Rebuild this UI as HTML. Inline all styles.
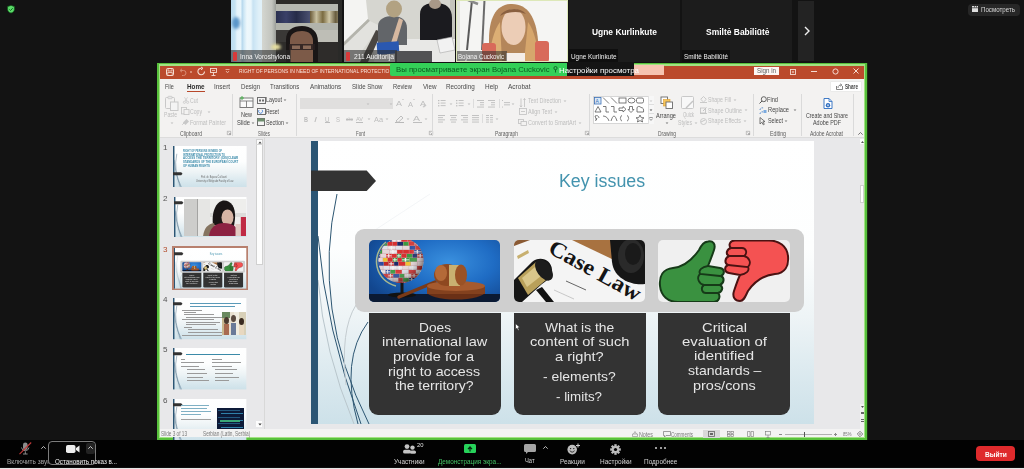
<!DOCTYPE html><html><head><meta charset="utf-8">
<style>
*{margin:0;padding:0;box-sizing:border-box}
html,body{width:1024px;height:469px;overflow:hidden;background:#131313;font-family:"Liberation Sans",sans-serif}
.a{position:absolute}
.t{position:absolute;white-space:nowrap;line-height:1}
svg{overflow:visible}
</style></head><body>
<div class="a" style="left:0;top:0;width:1024px;height:469px;overflow:hidden">
<svg class="a" style="left:6.5px;top:5.2px;" width="8" height="8.5" viewBox="0 0 8 8.5"><path d="M4 0.4 L7.4 1.6 V4.2 C7.4 6.2 6 7.4 4 8.1 C2 7.4 0.6 6.2 0.6 4.2 V1.6 Z" fill="#5cdc6a" stroke="#0e5a18" stroke-width="0.7"></path><path d="M2.4 4.4 L3.6 5.5 L5.7 3.2" stroke="#0e6a1e" stroke-width="1" fill="none"></path></svg>
<div class="a" style="left:231px;top:0px;width:111px;height:62px;background:#b9bab4;overflow:hidden;">
<div class="a" style="left:0px;top:0px;width:31px;height:62px;background:linear-gradient(90deg,#bcdcf0 0,#c4e2f2 4px,#e4f2fa 6px,#e8f6fc 10px,#b4d6ec 11px,#cfe8f5 13px,#eef8fc 16px,#eaf6fb 20px,#c8e2f2 22px,#d4eaf6 25px,#e0f0f8 28px);"></div>
<div class="a" style="left:1px;top:17px;width:8px;height:12px;border-radius:50%;background:#5b96c9;filter:blur(1.5px)"></div>
<div class="a" style="left:31px;top:0px;width:14px;height:62px;background:linear-gradient(90deg,#d4d6d0,#c2c4be 70%,#9a9d98);"></div>
<div class="a" style="left:45px;top:0px;width:66px;height:4px;background:#2c2b28;"></div>
<div class="a" style="left:45px;top:4px;width:66px;height:7px;background:#b6b8b0;"></div>
<div class="a" style="left:45px;top:11px;width:34px;height:12px;background:linear-gradient(90deg,#2a3050,#3a4068 30%,#262c48 60%,#4a5070);"></div>
<div class="a" style="left:79px;top:11px;width:32px;height:12px;background:linear-gradient(90deg,#6a5a38,#c8c0a0 20%,#7a6a40 40%,#d0c8a8 60%,#6a5e40 80%,#b0a888);"></div>
<div class="a" style="left:45px;top:23px;width:66px;height:7px;background:#b2b4ac;"></div>
<div class="a" style="left:45px;top:30px;width:14px;height:12px;background:#3a3836;"></div>
<div class="a" style="left:59px;top:30px;width:52px;height:12px;background:#bebeb6;"></div>
<div class="a" style="left:45px;top:42px;width:66px;height:20px;background:#2e2c2a;"></div>
<div class="a" style="left:107px;top:0px;width:4px;height:62px;background:#2a2a28;"></div>
<div class="a" style="left:40px;top:44px;width:10px;height:6px;border-radius:50%;background:#e8e0a0;filter:blur(1.5px)"></div>
<svg class="a" style="left:0;top:0" width="111" height="62"><path d="M55 62 L55 40 C55 30 62 26 71 26 C80 26 87 31 87 42 L87 62 Z" fill="#1a1616"></path><path d="M59 62 V40 C59 34 64 31 71 31 C78 31 82 35 82 41 V62 Z" fill="#7c5a48"></path><path d="M58 44 H84 V50 H58 Z" fill="#2a2020" opacity="0.85"></path><rect x="61" y="45.5" width="8" height="3.5" fill="#8a6a58"></rect><rect x="72" y="45.5" width="8" height="3.5" fill="#8a6a58"></rect></svg>
<div class="a" style="left:0px;top:50px;width:60px;height:12px;background:rgba(45,45,45,0.6);"></div>
<div class="a" style="left:2px;top:52px;width:4px;height:9px;background:#d83a3a;border-radius:1px"></div>
</div>
<div class="t" style="left: 240px; top: 52.95px; font-size: 7px; color: rgb(244, 244, 244); font-weight: 400; font-family: &quot;Liberation Sans&quot;; transform-origin: 0px 50%; transform: scaleX(0.924);">Inna Voroshylona</div>
<div class="a" style="left:344px;top:0px;width:111px;height:62px;background:#d6d6d0;overflow:hidden;">
<svg class="a" style="left:0;top:0" width="111" height="62">
<polygon points="0,0 22,0 24,19 0,42" fill="#f4f4f2"></polygon>
<polygon points="0,42 24,19 26,21 0,46" fill="#b4b4ac"></polygon>
<polygon points="0,46 26,21 36,26 10,62 0,62" fill="#e2e2de"></polygon>
<rect x="106" y="0" width="5" height="62" fill="#c4c4bc"></rect>
<rect x="30" y="39" width="81" height="23" fill="#e8e8e6"></rect>
<polygon points="16,62 32,30 38,32 24,62" fill="#4a4642"></polygon>
<path d="M76 40 V14 C76 6 82 3 92 3 C102 3 108 8 108 18 V40 Z" fill="#1b1b1f"></path>
<ellipse cx="91" cy="4" rx="6" ry="5" fill="#a89888"></ellipse>
<path d="M34 45 V26 C34 19 41 16 49 16 C57 16 63 20 63 28 V45 Z" fill="#626569"></path>
<ellipse cx="50" cy="9" rx="8" ry="8.5" fill="#b2a282"></ellipse>
<path d="M47 43 L55 18 L59 20 L52 44 Z" fill="#d6b8a0"></path>
<rect x="33" y="42" width="22" height="12" fill="#2a58b0" transform="rotate(-4 44 48)"></rect>
<rect x="51" y="51" width="37" height="11" fill="#525254"></rect>
<polygon points="93,40 108,37 111,50 96,53" fill="#f2f2f2" stroke="#aaa" stroke-width="0.6"></polygon>
</svg>
<div class="a" style="left:0px;top:50px;width:53px;height:12px;background:rgba(45,45,45,0.6);"></div>
<div class="a" style="left:2px;top:52px;width:4px;height:9px;background:#d83a3a;border-radius:1px"></div>
</div>
<div class="t" style="left: 354px; top: 52.95px; font-size: 7px; color: rgb(244, 244, 244); font-weight: 400; font-family: &quot;Liberation Sans&quot;; transform-origin: 0px 50%; transform: scaleX(0.955);">211 Auditorija</div>
<div class="a" style="left:456px;top:0px;width:112px;height:62px;background:#f5f5f3;overflow:hidden;border:1px solid #dde8b8">
<svg class="a" style="left:-1px;top:-1px" width="112" height="62">
<rect x="0" y="0" width="4" height="62" fill="#e4e4de"></rect>
<path d="M16 0 L11 50" stroke="#5a5a5a" stroke-width="2"></path>
<path d="M28.5 0 L26 50" stroke="#6a6a6a" stroke-width="2"></path>
<path d="M12 0 L22 4" stroke="#8a8a8a" stroke-width="2.5"></path>
<path d="M33 62 L33 40 C33 18 40 4 56 4 C72 4 80 18 82 40 L83 62 Z" fill="#b4865a"></path>
<path d="M33 62 C34 45 38 30 44 22 L46 62 Z" fill="#dcae74"></path>
<path d="M83 62 C82 45 78 30 72 22 L68 62 Z" fill="#d6a66c"></path>
<ellipse cx="57.5" cy="27" rx="12" ry="18" fill="#eccdb6"></ellipse>
<path d="M44 16 C48 8 64 6 70 14 C64 11 52 11 44 16 Z" fill="#8a6040"></path>
<rect x="26" y="43" width="14" height="19" rx="3" fill="#d86a5a"></rect>
<rect x="79" y="41" width="14" height="21" rx="3" fill="#d86a5a"></rect>
<rect x="50" y="53" width="19" height="9" fill="#f4ede8"></rect>
</svg>
<div class="a" style="left:-1px;top:49.6px;width:51px;height:12.4px;background:rgba(45,45,45,0.55);"></div>
</div>
<div class="t" style="left: 458px; top: 52.95px; font-size: 7px; color: rgb(244, 244, 244); font-weight: 400; font-family: &quot;Liberation Sans&quot;; transform-origin: 0px 50%; transform: scaleX(0.882);">Bojana Cuckovic</div>
<div class="a" style="left:569px;top:0px;width:111px;height:62px;background:#1c1c1c;"></div>
<div class="t" style="left: 592px; top: 28.45px; font-size: 9px; color: rgb(255, 255, 255); font-weight: 700; font-family: &quot;Liberation Sans&quot;; transform-origin: 0px 50%; transform: scaleX(0.935);">Ugne Kurlinkute</div>
<div class="a" style="left:569px;top:49px;width:49px;height:13px;background:#0f0f0f;"></div>
<div class="t" style="left: 570.5px; top: 52.75px; font-size: 7px; color: rgb(238, 238, 238); font-weight: 400; font-family: &quot;Liberation Sans&quot;; transform-origin: 0px 50%; transform: scaleX(0.913);">Ugne Kurlinkute</div>
<div class="a" style="left:682px;top:0px;width:110px;height:62px;background:#1c1c1c;"></div>
<div class="t" style="left: 705.5px; top: 28.25px; font-size: 9px; color: rgb(255, 255, 255); font-weight: 700; font-family: &quot;Liberation Sans&quot;; transform-origin: 0px 50%; transform: scaleX(0.941);">Smiltė Babiliūtė</div>
<div class="a" style="left:682px;top:50px;width:48px;height:12px;background:#0f0f0f;"></div>
<div class="t" style="left: 683.5px; top: 52.55px; font-size: 7px; color: rgb(238, 238, 238); font-weight: 400; font-family: &quot;Liberation Sans&quot;; transform-origin: 0px 50%; transform: scaleX(0.912);">Smiltė Babiliūtė</div>
<div class="a" style="left:798px;top:1px;width:16px;height:60px;background:#232323;"></div>
<svg class="a" style="left:803px;top:26px;" width="8" height="10" viewBox="0 0 8 10"><path d="M2 1 L6 5 L2 9" stroke="#f0f0f0" stroke-width="1.4" fill="none"></path></svg>
<div class="a" style="left:968px;top:4px;width:52px;height:12px;background:#272727;border-radius:4px"></div>
<svg class="a" style="left:972px;top:6px;" width="6" height="6" viewBox="0 0 6 6"><rect x="0" y="0" width="6" height="1.5" fill="#e0e0e0"></rect><rect x="0" y="2.2" width="6" height="3.8" fill="#e0e0e0"></rect><rect x="2" y="0" width="0.6" height="1.5" fill="#272727"></rect><rect x="4" y="0" width="0.6" height="1.5" fill="#272727"></rect></svg>
<div class="t" style="left: 981px; top: 6.35px; font-size: 7px; color: rgb(216, 216, 216); font-weight: 400; font-family: &quot;Liberation Sans&quot;; transform-origin: 0px 50%; transform: scaleX(0.881);">Посмотреть</div>
<div class="a" style="left:157px;top:63px;width:711px;height:378px;background:#1c3214;"></div>
<div class="a" style="left:157px;top:63px;width:710px;height:377px;background:#58c13c;"></div>
<div class="a" style="left:159px;top:64px;width:706px;height:374px;background:#a3e283;"></div>
<div class="a" style="left:159.5px;top:65.5px;width:704.5px;height:371.5px;background:#f3f2f1;"></div>
<div class="a" style="left:159.5px;top:65.5px;width:704.5px;height:13px;background:#bb4a2c;"></div>
<div class="a" style="left:159.5px;top:137px;width:704.5px;height:292.3px;background:#e8e8ea;"></div>
<div class="a" style="left:159.5px;top:137px;width:704.2px;height:1px;background:#dcdcdc;"></div>
<div class="a" style="left:159.5px;top:429.3px;width:704.2px;height:8.1px;background:#f3f3f3;"></div>
<svg class="a" style="left:166px;top:67.5px;" width="8" height="8" viewBox="0 0 8 8"><rect x="0.5" y="0.5" width="7" height="7" rx="1" fill="none" stroke="#f6dcd2" stroke-width="1"></rect><rect x="2" y="0.5" width="4" height="2.5" fill="none" stroke="#f6dcd2" stroke-width="0.8"></rect><rect x="1.8" y="4.6" width="4.4" height="2.9" fill="none" stroke="#f6dcd2" stroke-width="0.8"></rect></svg>
<svg class="a" style="left:179px;top:67.5px;" width="7" height="8" viewBox="0 0 7 8"><path d="M1.5 2.5 H4.5 A2.5 2.5 0 0 1 4.5 7.5 H3" stroke="#d98c74" stroke-width="1" fill="none"></path><path d="M3 0.8 L1 2.5 L3 4.2" stroke="#d98c74" stroke-width="1" fill="none"></path></svg>
<div class="a" style="left:190px;top:71px;width:1.5px;height:1.5px;background:#d98c74;"></div>
<svg class="a" style="left:196.5px;top:67px;" width="9" height="9" viewBox="0 0 9 9"><path d="M7.5 4.5 A3.3 3.3 0 1 1 4.5 1.2" stroke="#f6dcd2" stroke-width="1.1" fill="none"></path><path d="M4 0 L6 1.3 L4 2.8" stroke="#f6dcd2" stroke-width="1" fill="none"></path></svg>
<svg class="a" style="left:210px;top:67.5px;" width="7" height="8" viewBox="0 0 7 8"><rect x="0.5" y="0.5" width="6" height="4" fill="none" stroke="#f6dcd2" stroke-width="0.9"></rect><path d="M3.5 4.5 V7.5 M1.5 7.5 H5.5" stroke="#f6dcd2" stroke-width="0.9"></path><path d="M2 2.5 H5" stroke="#f6dcd2" stroke-width="0.7"></path></svg>
<svg class="a" style="left:225px;top:69px;" width="5" height="5" viewBox="0 0 5 5"><path d="M0.5 0.5 H4.5 M1 2 L2.5 3.8 L4 2" stroke="#f0c8b8" stroke-width="0.8" fill="none"></path></svg>
<div class="t" style="left: 239px; top: 67.79px; font-size: 6.2px; color: rgb(248, 228, 220); font-weight: 400; font-family: &quot;Liberation Sans&quot;; transform-origin: 0px 50%; transform: scaleX(0.805);">RIGHT OF PERSONS IN NEED OF INTERNATIONAL PROTECTIO</div>
<div class="a" style="left:754px;top:67px;width:25px;height:8px;background:#fdf7f4;"></div>
<div class="t" style="left: 757px; top: 67.72px; font-size: 6.5px; color: rgb(90, 90, 90); font-weight: 400; font-family: &quot;Liberation Sans&quot;; transform-origin: 0px 50%; transform: scaleX(0.956);">Sign in</div>
<svg class="a" style="left:789.5px;top:68.5px;" width="6" height="6" viewBox="0 0 6 6"><rect x="0.5" y="0.5" width="5" height="5" fill="none" stroke="#f6dcd2" stroke-width="0.9"></rect><path d="M1.8 3 H4.2 M3 1.8 V4.2" stroke="#f6dcd2" stroke-width="0.7"></path></svg>
<div class="a" style="left:811px;top:71px;width:6px;height:1px;background:#f6dcd2;"></div>
<svg class="a" style="left:832px;top:68px;" width="7" height="7" viewBox="0 0 7 7"><circle cx="3.5" cy="3.5" r="2.6" fill="none" stroke="#f6dcd2" stroke-width="1"></circle></svg>
<svg class="a" style="left:853px;top:68px;" width="6" height="6" viewBox="0 0 6 6"><path d="M0.5 0.5 L5.5 5.5 M5.5 0.5 L0.5 5.5" stroke="#f6dcd2" stroke-width="1"></path></svg>
<div class="a" style="left:390px;top:63.3px;width:177px;height:12.8px;background:#34d058;border-radius:2px 0 0 2px"></div>
<div class="t" style="left: 396.4px; top: 66.4px; font-size: 8px; color: rgb(12, 90, 31); font-weight: 400; font-family: &quot;Liberation Sans&quot;; transform-origin: 0px 50%; transform: scaleX(0.968);">Вы просматриваете экран Bojana Cuckovic</div>
<div class="a" style="left:567px;top:62px;width:67px;height:14px;background:#141414;"></div>
<div class="a" style="left:634px;top:64.6px;width:30px;height:10.4px;background:#f6c3b0;"></div>
<svg class="a" style="left:553px;top:66px;" width="5" height="7" viewBox="0 0 5 7"><path d="M2.5 0.5 A1.6 1.6 0 1 1 2.5 3.7 A1.6 1.6 0 1 1 2.5 0.5 M2.5 3.7 V6.5" stroke="#12652a" stroke-width="1" fill="none"></path></svg>
<div class="t" style="left: 558.5px; top: 66.5px; font-size: 8px; color: rgb(255, 255, 255); font-weight: 400; font-family: &quot;Liberation Sans&quot;; transform-origin: 0px 50%; transform: scaleX(0.987);">Настройки просмотра</div>
<div class="t" style="left: 164.5px; top: 82.65px; font-size: 7px; color: rgb(74, 74, 74); font-weight: 400; font-family: &quot;Liberation Sans&quot;; transform-origin: 0px 50%; transform: scaleX(0.78);">File</div>
<div class="t" style="left: 187.2px; top: 82.65px; font-size: 7px; color: rgb(43, 43, 43); font-weight: 700; font-family: &quot;Liberation Sans&quot;; transform-origin: 0px 50%; transform: scaleX(0.905);">Home</div>
<div class="t" style="left: 214.3px; top: 82.65px; font-size: 7px; color: rgb(74, 74, 74); font-weight: 400; font-family: &quot;Liberation Sans&quot;; transform-origin: 0px 50%; transform: scaleX(0.919);">Insert</div>
<div class="t" style="left: 240.6px; top: 82.65px; font-size: 7px; color: rgb(74, 74, 74); font-weight: 400; font-family: &quot;Liberation Sans&quot;; transform-origin: 0px 50%; transform: scaleX(0.876);">Design</div>
<div class="t" style="left: 270px; top: 82.65px; font-size: 7px; color: rgb(74, 74, 74); font-weight: 400; font-family: &quot;Liberation Sans&quot;; transform-origin: 0px 50%; transform: scaleX(0.859);">Transitions</div>
<div class="t" style="left: 309.8px; top: 82.65px; font-size: 7px; color: rgb(74, 74, 74); font-weight: 400; font-family: &quot;Liberation Sans&quot;; transform-origin: 0px 50%; transform: scaleX(0.901);">Animations</div>
<div class="t" style="left: 351.5px; top: 82.65px; font-size: 7px; color: rgb(74, 74, 74); font-weight: 400; font-family: &quot;Liberation Sans&quot;; transform-origin: 0px 50%; transform: scaleX(0.871);">Slide Show</div>
<div class="t" style="left: 392.5px; top: 82.65px; font-size: 7px; color: rgb(74, 74, 74); font-weight: 400; font-family: &quot;Liberation Sans&quot;; transform-origin: 0px 50%; transform: scaleX(0.828);">Review</div>
<div class="t" style="left: 422.5px; top: 82.65px; font-size: 7px; color: rgb(74, 74, 74); font-weight: 400; font-family: &quot;Liberation Sans&quot;; transform-origin: 0px 50%; transform: scaleX(0.897);">View</div>
<div class="t" style="left: 445.8px; top: 82.65px; font-size: 7px; color: rgb(74, 74, 74); font-weight: 400; font-family: &quot;Liberation Sans&quot;; transform-origin: 0px 50%; transform: scaleX(0.899);">Recording</div>
<div class="t" style="left: 484.8px; top: 82.65px; font-size: 7px; color: rgb(74, 74, 74); font-weight: 400; font-family: &quot;Liberation Sans&quot;; transform-origin: 0px 50%; transform: scaleX(0.916);">Help</div>
<div class="t" style="left: 508px; top: 82.65px; font-size: 7px; color: rgb(74, 74, 74); font-weight: 400; font-family: &quot;Liberation Sans&quot;; transform-origin: 0px 50%; transform: scaleX(0.933);">Acrobat</div>
<div class="a" style="left:187px;top:90.5px;width:18px;height:1.6px;background:#b7472a;"></div>
<div class="a" style="left:831px;top:81.5px;width:29.5px;height:9px;background:#ffffff;box-shadow:0 0 0 0.5px #e4e4e4"></div>
<svg class="a" style="left:835.5px;top:82.5px;" width="7" height="7" viewBox="0 0 7 7"><path d="M0.5 3 V6.5 H6.5 V3" stroke="#666" stroke-width="0.8" fill="none"></path><path d="M2 5 C2 2.5 3.5 2 5.5 2 M4.3 0.8 L5.8 2 L4.3 3.3" stroke="#666" stroke-width="0.8" fill="none"></path></svg>
<div class="t" style="left: 845px; top: 82.75px; font-size: 7px; color: rgb(71, 71, 71); font-weight: 700; font-family: &quot;Liberation Sans&quot;; transform-origin: 0px 50%; transform: scaleX(0.668);">Share</div>
<svg class="a" style="left:165px;top:96px;" width="14" height="15" viewBox="0 0 14 15"><rect x="0.5" y="1.5" width="9" height="11" rx="1" fill="none" stroke="#c8c8c8" stroke-width="1"></rect><rect x="3" y="0.3" width="4" height="2.4" rx="0.6" fill="#e8e8e8" stroke="#c8c8c8" stroke-width="0.8"></rect><rect x="5.5" y="6" width="7.5" height="8.5" fill="#f4f4f4" stroke="#c8c8c8" stroke-width="1"></rect></svg>
<div class="t" style="left: 164px; top: 112.42px; font-size: 6.5px; color: rgb(189, 189, 189); font-weight: 400; font-family: &quot;Liberation Sans&quot;; transform-origin: 0px 50%; transform: scaleX(0.782);">Paste</div>
<svg class="a" style="left:169.5px;top:121.5px;" width="4" height="3" viewBox="0 0 4 3"><path d="M0.6 0.4 L2 2 L3.4 0.4 Z" fill="#bdbdbd"></path></svg>
<svg class="a" style="left:183px;top:97px;" width="6" height="7" viewBox="0 0 6 7"><circle cx="1.4" cy="5.3" r="1.1" fill="none" stroke="#c4c4c4" stroke-width="0.7"></circle><circle cx="4.6" cy="5.3" r="1.1" fill="none" stroke="#c4c4c4" stroke-width="0.7"></circle><path d="M1.5 0.3 L4 4.3 M4.5 0.3 L2 4.3" stroke="#c4c4c4" stroke-width="0.7"></path></svg>
<div class="t" style="left: 190px; top: 97.72px; font-size: 6.5px; color: rgb(189, 189, 189); font-weight: 400; font-family: &quot;Liberation Sans&quot;; transform-origin: 0px 50%; transform: scaleX(0.79);">Cut</div>
<svg class="a" style="left:181px;top:107px;" width="9" height="8" viewBox="0 0 9 8"><rect x="0.4" y="0.4" width="5" height="6.5" fill="none" stroke="#c4c4c4" stroke-width="0.8"></rect><rect x="3" y="2.4" width="5" height="5.2" fill="#f3f2f1" stroke="#c4c4c4" stroke-width="0.8"></rect></svg>
<div class="t" style="left: 190px; top: 108.92px; font-size: 6.5px; color: rgb(189, 189, 189); font-weight: 400; font-family: &quot;Liberation Sans&quot;; transform-origin: 0px 50%; transform: scaleX(0.79);">Copy</div>
<svg class="a" style="left:206.5px;top:110.5px;" width="4" height="3" viewBox="0 0 4 3"><path d="M0.6 0.4 L2 2 L3.4 0.4 Z" fill="#bdbdbd"></path></svg>
<svg class="a" style="left:182px;top:118px;" width="8" height="7" viewBox="0 0 8 7"><path d="M1 4.5 L4.5 1 L7 3.5 L3.5 7 Z" fill="#c8c8c8"></path><path d="M0.3 6.7 L2 5" stroke="#c8c8c8" stroke-width="1"></path></svg>
<div class="t" style="left: 190px; top: 119.92px; font-size: 6.5px; color: rgb(189, 189, 189); font-weight: 400; font-family: &quot;Liberation Sans&quot;; transform-origin: 0px 50%; transform: scaleX(0.837);">Format Painter</div>
<div class="t" style="left: 180px; top: 130.63px; font-size: 6.3px; color: rgb(92, 92, 92); font-weight: 400; font-family: &quot;Liberation Sans&quot;; transform-origin: 0px 50%; transform: scaleX(0.816);">Clipboard</div>
<svg class="a" style="left:227px;top:131px;" width="4" height="4" viewBox="0 0 4 4"><path d="M0.3 0.3 H3.7 V3.7 H0.3 Z M1.5 1.5 L3.4 3.4 M3.4 2 V3.4 H2" stroke="#8a8a8a" stroke-width="0.5" fill="none"></path></svg>
<div class="a" style="left:232px;top:94px;width:0.8px;height:42px;background:#dadada;"></div>
<svg class="a" style="left:239px;top:96px;" width="15" height="12" viewBox="0 0 15 12"><rect x="1" y="2" width="13" height="9.5" fill="#fafafa" stroke="#7a7a7a" stroke-width="1"></rect><path d="M1 5 H14 M7.5 5 V11.5" stroke="#7a7a7a" stroke-width="0.9"></path><path d="M3 0 V4 M1 2 H5" stroke="#4caf50" stroke-width="1"></path></svg>
<div class="t" style="left: 241px; top: 112.36px; font-size: 6.8px; color: rgb(71, 71, 71); font-weight: 400; font-family: &quot;Liberation Sans&quot;; transform-origin: 0px 50%; transform: scaleX(0.808);">New</div>
<div class="t" style="left: 237px; top: 119.66px; font-size: 6.8px; color: rgb(71, 71, 71); font-weight: 400; font-family: &quot;Liberation Sans&quot;; transform-origin: 0px 50%; transform: scaleX(0.86);">Slide</div>
<svg class="a" style="left:251px;top:121.7px;" width="4" height="3" viewBox="0 0 4 3"><path d="M0.6 0.4 L2 2 L3.4 0.4 Z" fill="#777"></path></svg>
<svg class="a" style="left:257px;top:97px;" width="9" height="7" viewBox="0 0 9 7"><rect x="0.5" y="0.5" width="8" height="6" fill="#f4f4f4" stroke="#6e6e6e" stroke-width="1"></rect><rect x="2" y="2.5" width="2" height="2" fill="#6e6e6e"></rect><rect x="5" y="2.5" width="2" height="2" fill="#6e6e6e"></rect></svg>
<div class="t" style="left: 266px; top: 97.46px; font-size: 6.8px; color: rgb(71, 71, 71); font-weight: 400; font-family: &quot;Liberation Sans&quot;; transform-origin: 0px 50%; transform: scaleX(0.783);">Layout</div>
<svg class="a" style="left:283px;top:99.4px;" width="4" height="3" viewBox="0 0 4 3"><path d="M0.6 0.4 L2 2 L3.4 0.4 Z" fill="#777"></path></svg>
<svg class="a" style="left:257px;top:108px;" width="9" height="7" viewBox="0 0 9 7"><rect x="0.5" y="0.5" width="8" height="6" fill="#f4f4f4" stroke="#6e6e6e" stroke-width="1"></rect><path d="M2 2 A2 2 0 1 0 5 1.8" stroke="#3a7bd5" stroke-width="0.8" fill="none"></path></svg>
<div class="t" style="left: 266px; top: 108.66px; font-size: 6.8px; color: rgb(71, 71, 71); font-weight: 400; font-family: &quot;Liberation Sans&quot;; transform-origin: 0px 50%; transform: scaleX(0.732);">Reset</div>
<svg class="a" style="left:257px;top:118px;" width="8" height="8" viewBox="0 0 8 8"><rect x="0.5" y="0.5" width="7" height="7" fill="#f4f4f4" stroke="#6e6e6e" stroke-width="1"></rect><rect x="0.5" y="0.5" width="7" height="3" fill="#6e8e6e"></rect></svg>
<div class="t" style="left: 266px; top: 119.76px; font-size: 6.8px; color: rgb(71, 71, 71); font-weight: 400; font-family: &quot;Liberation Sans&quot;; transform-origin: 0px 50%; transform: scaleX(0.794);">Section</div>
<svg class="a" style="left:285px;top:121.7px;" width="4" height="3" viewBox="0 0 4 3"><path d="M0.6 0.4 L2 2 L3.4 0.4 Z" fill="#777"></path></svg>
<div class="t" style="left: 258px; top: 130.63px; font-size: 6.3px; color: rgb(92, 92, 92); font-weight: 400; font-family: &quot;Liberation Sans&quot;; transform-origin: 0px 50%; transform: scaleX(0.699);">Slides</div>
<div class="a" style="left:296px;top:94px;width:0.8px;height:42px;background:#dadada;"></div>
<div class="a" style="left:300px;top:98.4px;width:70.5px;height:10.8px;background:#e0dfde;"></div>
<div class="a" style="left:371px;top:98.4px;width:22px;height:10.8px;background:#e0dfde;"></div>
<svg class="a" style="left:366px;top:103px;" width="4" height="3" viewBox="0 0 4 3"><path d="M0.6 0.4 L2 2 L3.4 0.4 Z" fill="#bdbdbd"></path></svg>
<svg class="a" style="left:389px;top:103px;" width="4" height="3" viewBox="0 0 4 3"><path d="M0.6 0.4 L2 2 L3.4 0.4 Z" fill="#bdbdbd"></path></svg>
<div class="t" style="left: 396px; top: 100.2px; font-size: 8px; color: rgb(189, 189, 189); font-weight: 400; font-family: &quot;Liberation Sans&quot;; transform-origin: 0px 50%; transform: scaleX(1.123);">A</div>
<div class="t" style="left: 402px; top: 98.55px; font-size: 5px; color: rgb(189, 189, 189); font-weight: 400; font-family: &quot;Liberation Sans&quot;; transform-origin: 0px 50%; transform: scaleX(1.196);">ˆ</div>
<div class="t" style="left: 408px; top: 101.52px; font-size: 6.5px; color: rgb(189, 189, 189); font-weight: 400; font-family: &quot;Liberation Sans&quot;; transform-origin: 0px 50%; transform: scaleX(1.151);">A</div>
<div class="t" style="left: 413px; top: 98.85px; font-size: 5px; color: rgb(189, 189, 189); font-weight: 400; font-family: &quot;Liberation Sans&quot;; transform-origin: 0px 50%; transform: scaleX(1.196);">ˇ</div>
<div class="t" style="left: 420px; top: 100.2px; font-size: 8px; color: rgb(189, 189, 189); font-weight: 400; font-family: &quot;Liberation Sans&quot;; transform-origin: 0px 50%; transform: scaleX(1.123);">A</div>
<svg class="a" style="left:422px;top:103px;" width="5" height="5" viewBox="0 0 5 5"><path d="M0.5 4 L3 1 L4.5 2.5 L2 4.5 Z" fill="#c8c8c8"></path></svg>
<div class="t" style="left: 304px; top: 115.55px; font-size: 7px; color: rgb(189, 189, 189); font-weight: 700; font-family: &quot;Liberation Sans&quot;; transform-origin: 0px 50%; transform: scaleX(0.79);">B</div>
<div class="t" style="left: 314px; top: 115.55px; font-size: 7px; color: rgb(189, 189, 189); font-weight: 400; font-family: &quot;Liberation Sans&quot;; font-style: italic; transform-origin: 0px 50%; transform: scaleX(1.536);">I</div>
<div class="t" style="left: 325px; top: 115.55px; font-size: 7px; color: rgb(189, 189, 189); font-weight: 400; font-family: &quot;Liberation Sans&quot;; transform-origin: 0px 50%; transform: scaleX(0.889);">U</div>
<div class="a" style="left:325px;top:122px;width:4.5px;height:0.6px;background:#bdbdbd;"></div>
<div class="t" style="left: 336px; top: 115.55px; font-size: 7px; color: rgb(189, 189, 189); font-weight: 400; font-family: &quot;Liberation Sans&quot;; transform-origin: 0px 50%; transform: scaleX(0.856);">S</div>
<div class="t" style="left: 346px; top: 116.77px; font-size: 5.5px; color: rgb(189, 189, 189); font-weight: 400; font-family: &quot;Liberation Sans&quot;; transform-origin: 0px 50%; transform: scaleX(0.789);">abc</div>
<div class="a" style="left:346px;top:118.8px;width:7px;height:0.6px;background:#bdbdbd;"></div>
<div class="t" style="left: 356px; top: 115.7px; font-size: 6px; color: rgb(189, 189, 189); font-weight: 400; font-family: &quot;Liberation Sans&quot;; transform-origin: 0px 50%; transform: scaleX(0.926);">AV</div>
<div class="a" style="left:356px;top:122px;width:7px;height:0.6px;background:#bdbdbd;"></div>
<svg class="a" style="left:366.5px;top:118px;" width="4" height="3" viewBox="0 0 4 3"><path d="M0.6 0.4 L2 2 L3.4 0.4 Z" fill="#bdbdbd"></path></svg>
<div class="t" style="left: 374px; top: 115.55px; font-size: 7px; color: rgb(189, 189, 189); font-weight: 400; font-family: &quot;Liberation Sans&quot;; transform-origin: 0px 50%; transform: scaleX(1.051);">Aa</div>
<svg class="a" style="left:385px;top:118px;" width="4" height="3" viewBox="0 0 4 3"><path d="M0.6 0.4 L2 2 L3.4 0.4 Z" fill="#bdbdbd"></path></svg>
<svg class="a" style="left:395px;top:114px;" width="9" height="9" viewBox="0 0 9 9"><path d="M1 7 L6 2 L8 4 L3 8.5 Z" fill="none" stroke="#b8b8b8" stroke-width="0.9"></path><rect x="0" y="8" width="9" height="1" fill="#b8b8b8"></rect></svg>
<svg class="a" style="left:405.5px;top:118px;" width="4" height="3" viewBox="0 0 4 3"><path d="M0.6 0.4 L2 2 L3.4 0.4 Z" fill="#bdbdbd"></path></svg>
<div class="t" style="left: 413px; top: 114.67px; font-size: 7.5px; color: rgb(189, 189, 189); font-weight: 400; font-family: &quot;Liberation Sans&quot;; transform-origin: 0px 50%; transform: scaleX(1.396);">A</div>
<div class="a" style="left:412.5px;top:121.8px;width:9px;height:1.2px;background:#bdbdbd;"></div>
<svg class="a" style="left:423.5px;top:118px;" width="4" height="3" viewBox="0 0 4 3"><path d="M0.6 0.4 L2 2 L3.4 0.4 Z" fill="#bdbdbd"></path></svg>
<div class="t" style="left: 356px; top: 130.63px; font-size: 6.3px; color: rgb(92, 92, 92); font-weight: 400; font-family: &quot;Liberation Sans&quot;; transform-origin: 0px 50%; transform: scaleX(0.714);">Font</div>
<svg class="a" style="left:428.5px;top:131px;" width="4" height="4" viewBox="0 0 4 4"><path d="M0.3 0.3 H3.7 V3.7 H0.3 Z M1.5 1.5 L3.4 3.4 M3.4 2 V3.4 H2" stroke="#8a8a8a" stroke-width="0.5" fill="none"></path></svg>
<div class="a" style="left:432px;top:94px;width:0.8px;height:42px;background:#dadada;"></div>
<svg class="a" style="left:437.5px;top:100px;" width="8" height="7" viewBox="0 0 8 7"><rect x="0" y="0.0" width="1.4" height="1.2" fill="#bdbdbd"></rect><rect x="2.6" y="0.0" width="5" height="0.9" fill="#bdbdbd"></rect><rect x="0" y="2.6" width="1.4" height="1.2" fill="#bdbdbd"></rect><rect x="2.6" y="2.6" width="5" height="0.9" fill="#bdbdbd"></rect><rect x="0" y="5.2" width="1.4" height="1.2" fill="#bdbdbd"></rect><rect x="2.6" y="5.2" width="5" height="0.9" fill="#bdbdbd"></rect></svg>
<svg class="a" style="left:448.5px;top:103px;" width="4" height="3" viewBox="0 0 4 3"><path d="M0.6 0.4 L2 2 L3.4 0.4 Z" fill="#bdbdbd"></path></svg>
<svg class="a" style="left:456px;top:100px;" width="8" height="7" viewBox="0 0 8 7"><rect x="0" y="0.0" width="1.4" height="1.2" fill="#bdbdbd"></rect><rect x="2.6" y="0.0" width="5" height="0.9" fill="#bdbdbd"></rect><rect x="0" y="2.6" width="1.4" height="1.2" fill="#bdbdbd"></rect><rect x="2.6" y="2.6" width="5" height="0.9" fill="#bdbdbd"></rect><rect x="0" y="5.2" width="1.4" height="1.2" fill="#bdbdbd"></rect><rect x="2.6" y="5.2" width="5" height="0.9" fill="#bdbdbd"></rect></svg>
<svg class="a" style="left:466.5px;top:103px;" width="4" height="3" viewBox="0 0 4 3"><path d="M0.6 0.4 L2 2 L3.4 0.4 Z" fill="#bdbdbd"></path></svg>
<div class="a" style="left:473px;top:99px;width:0.7px;height:9px;background:#dcdcdc;"></div>
<svg class="a" style="left:477px;top:99.5px;" width="8" height="8" viewBox="0 0 8 8"><rect x="0" y="0.0" width="7" height="0.9" fill="#bdbdbd"></rect><rect x="3" y="2.2" width="4" height="0.9" fill="#bdbdbd"></rect><rect x="3" y="4.4" width="4" height="0.9" fill="#bdbdbd"></rect><rect x="0" y="6.6000000000000005" width="7" height="0.9" fill="#bdbdbd"></rect></svg>
<svg class="a" style="left:488px;top:99.5px;" width="8" height="8" viewBox="0 0 8 8"><rect x="0" y="0.0" width="7" height="0.9" fill="#bdbdbd"></rect><rect x="3" y="2.2" width="4" height="0.9" fill="#bdbdbd"></rect><rect x="3" y="4.4" width="4" height="0.9" fill="#bdbdbd"></rect><rect x="0" y="6.6000000000000005" width="7" height="0.9" fill="#bdbdbd"></rect></svg>
<div class="a" style="left:498.5px;top:99px;width:0.7px;height:9px;background:#dcdcdc;"></div>
<svg class="a" style="left:502px;top:99.5px;" width="8" height="8" viewBox="0 0 8 8"><rect x="0" y="0.0" width="1" height="0.9" fill="#bdbdbd"></rect><rect x="2" y="2.2" width="6" height="0.9" fill="#bdbdbd"></rect><rect x="2" y="4.4" width="6" height="0.9" fill="#bdbdbd"></rect><rect x="0" y="6.6000000000000005" width="1" height="0.9" fill="#bdbdbd"></rect></svg>
<svg class="a" style="left:510.5px;top:103px;" width="4" height="3" viewBox="0 0 4 3"><path d="M0.6 0.4 L2 2 L3.4 0.4 Z" fill="#bdbdbd"></path></svg>
<svg class="a" style="left:438px;top:115px;" width="8" height="8" viewBox="0 0 8 8"><rect x="0" y="0.0" width="7" height="0.9" fill="#bdbdbd"></rect><rect x="0" y="2.2" width="5" height="0.9" fill="#bdbdbd"></rect><rect x="0" y="4.4" width="7" height="0.9" fill="#bdbdbd"></rect><rect x="0" y="6.6000000000000005" width="5" height="0.9" fill="#bdbdbd"></rect></svg>
<svg class="a" style="left:450px;top:115px;" width="8" height="8" viewBox="0 0 8 8"><rect x="0" y="0.0" width="7" height="0.9" fill="#bdbdbd"></rect><rect x="1" y="2.2" width="5" height="0.9" fill="#bdbdbd"></rect><rect x="0" y="4.4" width="7" height="0.9" fill="#bdbdbd"></rect><rect x="1" y="6.6000000000000005" width="5" height="0.9" fill="#bdbdbd"></rect></svg>
<svg class="a" style="left:461px;top:115px;" width="8" height="8" viewBox="0 0 8 8"><rect x="0" y="0.0" width="7" height="0.9" fill="#bdbdbd"></rect><rect x="2" y="2.2" width="5" height="0.9" fill="#bdbdbd"></rect><rect x="0" y="4.4" width="7" height="0.9" fill="#bdbdbd"></rect><rect x="2" y="6.6000000000000005" width="5" height="0.9" fill="#bdbdbd"></rect></svg>
<svg class="a" style="left:472px;top:115px;" width="8" height="8" viewBox="0 0 8 8"><rect x="0" y="0.0" width="7" height="0.9" fill="#bdbdbd"></rect><rect x="0" y="2.2" width="7" height="0.9" fill="#bdbdbd"></rect><rect x="0" y="4.4" width="7" height="0.9" fill="#bdbdbd"></rect><rect x="0" y="6.6000000000000005" width="7" height="0.9" fill="#bdbdbd"></rect></svg>
<div class="a" style="left:481.5px;top:114px;width:0.7px;height:9px;background:#dcdcdc;"></div>
<svg class="a" style="left:486px;top:115px;" width="8" height="8" viewBox="0 0 8 8"><rect x="0" y="0.0" width="3" height="0.9" fill="#bdbdbd"></rect><rect x="0" y="2.2" width="3" height="0.9" fill="#bdbdbd"></rect><rect x="0" y="4.4" width="3" height="0.9" fill="#bdbdbd"></rect><rect x="0" y="6.6000000000000005" width="3" height="0.9" fill="#bdbdbd"></rect></svg>
<svg class="a" style="left:489.5px;top:115px;" width="8" height="8" viewBox="0 0 8 8"><rect x="0" y="0.0" width="3" height="0.9" fill="#bdbdbd"></rect><rect x="0" y="2.2" width="3" height="0.9" fill="#bdbdbd"></rect><rect x="0" y="4.4" width="3" height="0.9" fill="#bdbdbd"></rect><rect x="0" y="6.6000000000000005" width="3" height="0.9" fill="#bdbdbd"></rect></svg>
<svg class="a" style="left:494.5px;top:118px;" width="4" height="3" viewBox="0 0 4 3"><path d="M0.6 0.4 L2 2 L3.4 0.4 Z" fill="#bdbdbd"></path></svg>
<svg class="a" style="left:519.5px;top:97.5px;" width="6" height="10" viewBox="0 0 6 10"><path d="M1 0.5 V9 M4.5 0.5 V9 M0 7.5 L1 9 L2 7.5 M3.5 2 L4.5 0.5 L5.5 2" stroke="#c0c0c0" stroke-width="0.8" fill="none"></path></svg>
<div class="t" style="left: 528px; top: 97.72px; font-size: 6.5px; color: rgb(189, 189, 189); font-weight: 400; font-family: &quot;Liberation Sans&quot;; transform-origin: 0px 50%; transform: scaleX(0.838);">Text Direction</div>
<svg class="a" style="left:563px;top:99.5px;" width="4" height="3" viewBox="0 0 4 3"><path d="M0.6 0.4 L2 2 L3.4 0.4 Z" fill="#bdbdbd"></path></svg>
<svg class="a" style="left:519px;top:108px;" width="8" height="7" viewBox="0 0 8 7"><rect x="0.5" y="0.5" width="7" height="6" fill="none" stroke="#c0c0c0" stroke-width="0.8"></rect><path d="M2 3.5 H6" stroke="#c0c0c0" stroke-width="0.8"></path></svg>
<div class="t" style="left: 528px; top: 108.72px; font-size: 6.5px; color: rgb(189, 189, 189); font-weight: 400; font-family: &quot;Liberation Sans&quot;; transform-origin: 0px 50%; transform: scaleX(0.855);">Align Text</div>
<svg class="a" style="left:553.5px;top:110.5px;" width="4" height="3" viewBox="0 0 4 3"><path d="M0.6 0.4 L2 2 L3.4 0.4 Z" fill="#bdbdbd"></path></svg>
<svg class="a" style="left:518px;top:118.5px;" width="9" height="7" viewBox="0 0 9 7"><rect x="0.5" y="0.5" width="5" height="4" fill="none" stroke="#c0c0c0" stroke-width="0.8"></rect><rect x="3" y="2.5" width="5.5" height="4" fill="#f3f2f1" stroke="#c0c0c0" stroke-width="0.8"></rect></svg>
<div class="t" style="left: 528px; top: 119.83px; font-size: 6.5px; color: rgb(189, 189, 189); font-weight: 400; font-family: &quot;Liberation Sans&quot;; transform-origin: 0px 50%; transform: scaleX(0.836);">Convert to SmartArt</div>
<svg class="a" style="left:578px;top:121.6px;" width="4" height="3" viewBox="0 0 4 3"><path d="M0.6 0.4 L2 2 L3.4 0.4 Z" fill="#bdbdbd"></path></svg>
<div class="t" style="left: 495px; top: 130.63px; font-size: 6.3px; color: rgb(92, 92, 92); font-weight: 400; font-family: &quot;Liberation Sans&quot;; transform-origin: 0px 50%; transform: scaleX(0.782);">Paragraph</div>
<svg class="a" style="left:584.5px;top:131px;" width="4" height="4" viewBox="0 0 4 4"><path d="M0.3 0.3 H3.7 V3.7 H0.3 Z M1.5 1.5 L3.4 3.4 M3.4 2 V3.4 H2" stroke="#8a8a8a" stroke-width="0.5" fill="none"></path></svg>
<div class="a" style="left:588.6px;top:94px;width:0.8px;height:42px;background:#dadada;"></div>
<div class="a" style="left:592.5px;top:95.5px;width:61.5px;height:28.2px;background:#ffffff;border:0.7px solid #d6d6d6"></div>
<svg class="a" style="left:594px;top:97px;" width="52" height="26" viewBox="0 0 52 26">
<rect x="0.5" y="0.5" width="6.5" height="6.5" fill="#dbe8f6" stroke="#3a6fb5" stroke-width="0.8"></rect><text x="1.6" y="5.6" font-size="5" fill="#3a6fb5" font-family="Liberation Sans">A</text>
<path d="M9 0.5 L15 6.5 M17 0.5 L23 6.5" stroke="#5a5a5a" stroke-width="0.8"></path>
<rect x="25" y="1" width="7" height="5" fill="none" stroke="#5a5a5a" stroke-width="0.8"></rect>
<ellipse cx="37.5" cy="3.5" rx="3.5" ry="2.5" fill="none" stroke="#5a5a5a" stroke-width="0.8"></ellipse>
<rect x="42.5" y="1" width="7" height="5" rx="1.5" fill="none" stroke="#5a5a5a" stroke-width="0.8"></rect>
<path d="M1 15 L4 9.5 L7 15 Z" fill="none" stroke="#5a5a5a" stroke-width="0.8"></path>
<path d="M9 9.5 H12 V15 H15 M17 9.5 H20 V15 H23" stroke="#5a5a5a" stroke-width="0.8" fill="none"></path>
<path d="M25 11 H29 V9.5 L32 12.3 L29 15 V13.5 H25 Z" fill="none" stroke="#5a5a5a" stroke-width="0.8"></path>
<path d="M35.5 9.5 H38.5 V12.5 H40 L37 15.5 L34 12.5 H35.5 Z" fill="none" stroke="#5a5a5a" stroke-width="0.8"></path>
<path d="M43 15 V11 C43 9 46 9 47 10.5 C49 10.5 50 12 49.5 15 Z" fill="none" stroke="#5a5a5a" stroke-width="0.8"></path>
<path d="M1 19 C3 18 5 19 5 21 M1 19 L2.5 23 M3 21 L1.5 24" stroke="#5a5a5a" stroke-width="0.8" fill="none"></path>
<path d="M9 19 C12 19 14 21 15 24 M17 24 C18 21 19 19 20 19 C21 19 22 21 23 24" stroke="#5a5a5a" stroke-width="0.8" fill="none"></path>
<path d="M28 18.5 C26.5 18.5 27 21 26 21.2 C27 21.4 26.5 24 28 24 M33 18.5 C34.5 18.5 34 21 35 21.2 C34 21.4 34.5 24 33 24" stroke="#5a5a5a" stroke-width="0.8" fill="none"></path>
<path d="M46 18 L47.2 20.6 L50 20.8 L47.8 22.5 L48.6 25 L46 23.6 L43.4 25 L44.2 22.5 L42 20.8 L44.8 20.6 Z" fill="none" stroke="#5a5a5a" stroke-width="0.8"></path>
</svg>
<div class="a" style="left:647.5px;top:96px;width:6px;height:27.5px;background:#f7f7f7;border-left:0.6px solid #e0e0e0"></div>
<div class="a" style="left:647.5px;top:104.2px;width:6px;height:0.6px;background:#dedede;"></div>
<div class="a" style="left:647.5px;top:113.2px;width:6px;height:0.6px;background:#dedede;"></div>
<svg class="a" style="left:649px;top:99.5px;" width="4" height="3" viewBox="0 0 4 3"><path d="M0.6 0.4 L2 2 L3.4 0.4 Z" fill="#c8c8c8"></path></svg>
<svg class="a" style="left:649px;top:108.5px;" width="4" height="3" viewBox="0 0 4 3"><path d="M0.6 0.4 L2 2 L3.4 0.4 Z" fill="#555"></path></svg>
<svg class="a" style="left:649px;top:117px;" width="4" height="4" viewBox="0 0 4 4"><path d="M0.3 0.5 H3.7 M0.3 1.5 L2 3.4 L3.7 1.5" stroke="#555" stroke-width="0.6" fill="none"></path></svg>
<svg class="a" style="left:660px;top:96px;" width="13" height="13" viewBox="0 0 13 13"><rect x="1" y="1" width="6.5" height="6.5" fill="#fff" stroke="#6a6a6a" stroke-width="0.9"></rect><rect x="3.5" y="3.5" width="6.5" height="6.5" fill="#f7c55a" stroke="#e0a030" stroke-width="0.6"></rect><rect x="6" y="6" width="6.5" height="6.5" fill="#fff" stroke="#6a6a6a" stroke-width="0.9"></rect></svg>
<div class="t" style="left: 656px; top: 112.56px; font-size: 6.8px; color: rgb(71, 71, 71); font-weight: 400; font-family: &quot;Liberation Sans&quot;; transform-origin: 0px 50%; transform: scaleX(0.827);">Arrange</div>
<svg class="a" style="left:664.5px;top:121.5px;" width="4" height="3" viewBox="0 0 4 3"><path d="M0.6 0.4 L2 2 L3.4 0.4 Z" fill="#777"></path></svg>
<svg class="a" style="left:681px;top:96px;" width="14" height="14" viewBox="0 0 14 14"><rect x="0.5" y="0.5" width="12" height="12" rx="1" fill="#f8f8f8" stroke="#c4c4c4" stroke-width="0.9"></rect><path d="M5 12 L12 5" stroke="#c4c4c4" stroke-width="1.5"></path></svg>
<div class="t" style="left: 683px; top: 112.36px; font-size: 6.8px; color: rgb(189, 189, 189); font-weight: 400; font-family: &quot;Liberation Sans&quot;; transform-origin: 0px 50%; transform: scaleX(0.633);">Quick</div>
<div class="t" style="left: 678px; top: 119.56px; font-size: 6.8px; color: rgb(189, 189, 189); font-weight: 400; font-family: &quot;Liberation Sans&quot;; transform-origin: 0px 50%; transform: scaleX(0.756);">Styles</div>
<svg class="a" style="left:693.5px;top:121.5px;" width="4" height="3" viewBox="0 0 4 3"><path d="M0.6 0.4 L2 2 L3.4 0.4 Z" fill="#bdbdbd"></path></svg>
<svg class="a" style="left:700px;top:95.5px;" width="7" height="7" viewBox="0 0 7 7"><path d="M3.5 0.5 L6.3 3.3 L3.5 6 L0.7 3.3 Z" fill="none" stroke="#c0c0c0" stroke-width="0.8"></path><rect x="0" y="6.2" width="7" height="0.8" fill="#c0c0c0"></rect></svg>
<div class="t" style="left: 708px; top: 97.22px; font-size: 6.5px; color: rgb(189, 189, 189); font-weight: 400; font-family: &quot;Liberation Sans&quot;; transform-origin: 0px 50%; transform: scaleX(0.796);">Shape Fill</div>
<svg class="a" style="left:732.5px;top:99px;" width="4" height="3" viewBox="0 0 4 3"><path d="M0.6 0.4 L2 2 L3.4 0.4 Z" fill="#bdbdbd"></path></svg>
<svg class="a" style="left:700px;top:106.5px;" width="7" height="7" viewBox="0 0 7 7"><rect x="0.5" y="1" width="5" height="5" fill="none" stroke="#c0c0c0" stroke-width="0.8"></rect><path d="M3 4 L6.5 0.5" stroke="#c0c0c0" stroke-width="0.9"></path><rect x="0" y="6.2" width="7" height="0.8" fill="#c0c0c0"></rect></svg>
<div class="t" style="left: 708px; top: 107.52px; font-size: 6.5px; color: rgb(189, 189, 189); font-weight: 400; font-family: &quot;Liberation Sans&quot;; transform-origin: 0px 50%; transform: scaleX(0.825);">Shape Outline</div>
<svg class="a" style="left:744px;top:109.3px;" width="4" height="3" viewBox="0 0 4 3"><path d="M0.6 0.4 L2 2 L3.4 0.4 Z" fill="#bdbdbd"></path></svg>
<svg class="a" style="left:700px;top:117.5px;" width="7" height="7" viewBox="0 0 7 7"><circle cx="3.5" cy="3.5" r="3" fill="none" stroke="#c0c0c0" stroke-width="0.8"></circle><path d="M1 4 L5 2" stroke="#c0c0c0" stroke-width="0.9"></path></svg>
<div class="t" style="left: 708px; top: 118.22px; font-size: 6.5px; color: rgb(189, 189, 189); font-weight: 400; font-family: &quot;Liberation Sans&quot;; transform-origin: 0px 50%; transform: scaleX(0.818);">Shape Effects</div>
<svg class="a" style="left:743px;top:120px;" width="4" height="3" viewBox="0 0 4 3"><path d="M0.6 0.4 L2 2 L3.4 0.4 Z" fill="#bdbdbd"></path></svg>
<div class="t" style="left: 658px; top: 130.63px; font-size: 6.3px; color: rgb(92, 92, 92); font-weight: 400; font-family: &quot;Liberation Sans&quot;; transform-origin: 0px 50%; transform: scaleX(0.779);">Drawing</div>
<svg class="a" style="left:746px;top:131px;" width="4" height="4" viewBox="0 0 4 4"><path d="M0.3 0.3 H3.7 V3.7 H0.3 Z M1.5 1.5 L3.4 3.4 M3.4 2 V3.4 H2" stroke="#8a8a8a" stroke-width="0.5" fill="none"></path></svg>
<div class="a" style="left:753.3px;top:94px;width:0.8px;height:42px;background:#dadada;"></div>
<svg class="a" style="left:759px;top:95.5px;" width="8" height="8" viewBox="0 0 8 8"><circle cx="4.8" cy="3.2" r="2.5" fill="none" stroke="#555" stroke-width="0.9"></circle><path d="M3 5 L0.5 7.5" stroke="#555" stroke-width="1"></path></svg>
<div class="t" style="left: 767px; top: 96.66px; font-size: 6.8px; color: rgb(71, 71, 71); font-weight: 400; font-family: &quot;Liberation Sans&quot;; transform-origin: 0px 50%; transform: scaleX(0.831);">Find</div>
<svg class="a" style="left:759px;top:106.5px;" width="8" height="8" viewBox="0 0 8 8"><path d="M1 3 C1 1 3 0.5 4.5 1 M1 7 C1 5 3 4.5 4.5 5" stroke="#2d6fc0" stroke-width="0.8" fill="none" stroke-dasharray="1 0.6"></path><rect x="4.5" y="3" width="3" height="3" fill="#7aaae0"></rect></svg>
<div class="t" style="left: 768px; top: 107.36px; font-size: 6.8px; color: rgb(71, 71, 71); font-weight: 400; font-family: &quot;Liberation Sans&quot;; transform-origin: 0px 50%; transform: scaleX(0.842);">Replace</div>
<svg class="a" style="left:792.5px;top:109.3px;" width="4" height="3" viewBox="0 0 4 3"><path d="M0.6 0.4 L2 2 L3.4 0.4 Z" fill="#777"></path></svg>
<svg class="a" style="left:759px;top:117px;" width="7" height="8" viewBox="0 0 7 8"><path d="M1 0.5 V7 L2.8 5.3 L4.3 7.8 L5.3 7.3 L3.9 4.8 L6 4.6 Z" fill="none" stroke="#555" stroke-width="0.8"></path></svg>
<div class="t" style="left: 768px; top: 118.26px; font-size: 6.8px; color: rgb(71, 71, 71); font-weight: 400; font-family: &quot;Liberation Sans&quot;; transform-origin: 0px 50%; transform: scaleX(0.794);">Select</div>
<svg class="a" style="left:784px;top:120.2px;" width="4" height="3" viewBox="0 0 4 3"><path d="M0.6 0.4 L2 2 L3.4 0.4 Z" fill="#777"></path></svg>
<div class="t" style="left: 770px; top: 130.94px; font-size: 6.3px; color: rgb(92, 92, 92); font-weight: 400; font-family: &quot;Liberation Sans&quot;; transform-origin: 0px 50%; transform: scaleX(0.83);">Editing</div>
<div class="a" style="left:801.4px;top:94px;width:0.8px;height:42px;background:#dadada;"></div>
<svg class="a" style="left:823px;top:97.5px;" width="10" height="11" viewBox="0 0 10 11"><path d="M1 0.5 H6 L9 3.5 V10.5 H1 Z" fill="#fff" stroke="#2b6cc0" stroke-width="0.9"></path><path d="M6 0.5 V3.5 H9" fill="none" stroke="#2b6cc0" stroke-width="0.8"></path><circle cx="5" cy="7.3" r="2.2" fill="#2b6cc0"></circle><path d="M4 7.2 H6 M5 6.3 V8.3" stroke="#fff" stroke-width="0.6"></path></svg>
<div class="t" style="left: 806px; top: 112.86px; font-size: 6.8px; color: rgb(71, 71, 71); font-weight: 400; font-family: &quot;Liberation Sans&quot;; transform-origin: 0px 50%; transform: scaleX(0.783);">Create and Share</div>
<div class="t" style="left: 813px; top: 120.06px; font-size: 6.8px; color: rgb(71, 71, 71); font-weight: 400; font-family: &quot;Liberation Sans&quot;; transform-origin: 0px 50%; transform: scaleX(0.797);">Adobe PDF</div>
<div class="t" style="left: 810px; top: 130.94px; font-size: 6.3px; color: rgb(92, 92, 92); font-weight: 400; font-family: &quot;Liberation Sans&quot;; transform-origin: 0px 50%; transform: scaleX(0.799);">Adobe Acrobat</div>
<div class="a" style="left:853px;top:94px;width:0.8px;height:42px;background:#dadada;"></div>
<svg class="a" style="left:858px;top:131.5px;" width="5" height="3" viewBox="0 0 5 3"><path d="M0.3 2.7 L2.5 0.5 L4.7 2.7" stroke="#555" stroke-width="0.8" fill="none"></path></svg>
<div class="a" style="left:255.7px;top:139px;width:7px;height:126px;background:#fdfdfd;border:0.6px solid #d0d0d0"></div>
<div class="a" style="left:255.7px;top:144.3px;width:7px;height:0.6px;background:#d6d6d6;"></div>
<svg class="a" style="left:257.5px;top:140.5px;" width="4" height="3" viewBox="0 0 4 3"><path d="M0.3 2.5 L2 0.5 L3.7 2.5 Z" fill="#444"></path></svg>
<div class="a" style="left:264px;top:137px;width:1px;height:292px;background:#d8d8d8;"></div>
<div class="a" style="left:256px;top:421px;width:6px;height:6px;background:#fdfdfd;"></div>
<svg class="a" style="left:257.5px;top:423px;" width="4" height="3" viewBox="0 0 4 3"><path d="M0.3 0.5 L2 2.5 L3.7 0.5 Z" fill="#444"></path></svg>
<div class="a" style="left:859.5px;top:138px;width:4.2px;height:291px;background:#e9e9e9;"></div>
<div class="a" style="left:860.2px;top:139px;width:4px;height:5px;background:#fdfdfd;"></div>
<svg class="a" style="left:861px;top:140.8px;" width="3" height="2" viewBox="0 0 3 2"><path d="M0 2 L1.5 0 L3 2Z" fill="#555"></path></svg>
<div class="a" style="left:860.2px;top:184.6px;width:4px;height:18px;background:#ffffff;border:0.5px solid #cfcfcf"></div>
<div class="a" style="left:860px;top:404px;width:4px;height:25px;background:#f2f2f2;"></div>
<svg class="a" style="left:861px;top:406px;" width="3" height="2" viewBox="0 0 3 2"><path d="M0 0 L1.5 2 L3 0Z" fill="#555"></path></svg>
<div class="a" style="left:861px;top:411.5px;width:2.5px;height:0.8px;background:#666;"></div>
<div class="a" style="left:861px;top:413px;width:2.5px;height:0.8px;background:#666;"></div>
<div class="a" style="left:861px;top:419px;width:2.5px;height:0.8px;background:#666;"></div>
<div class="a" style="left:861px;top:420.5px;width:2.5px;height:0.8px;background:#666;"></div>
<div class="t" style="left: 163px; top: 144.1px; font-size: 8px; color: rgb(85, 85, 85); font-weight: 400; font-family: &quot;Liberation Sans&quot;; transform-origin: 0px 50%; transform: scaleX(1.011);">1</div>
<div class="t" style="left: 163px; top: 194.6px; font-size: 8px; color: rgb(85, 85, 85); font-weight: 400; font-family: &quot;Liberation Sans&quot;; transform-origin: 0px 50%; transform: scaleX(1.011);">2</div>
<div class="t" style="left: 163px; top: 245.6px; font-size: 8px; color: rgb(178, 74, 42); font-weight: 400; font-family: &quot;Liberation Sans&quot;; transform-origin: 0px 50%; transform: scaleX(1.011);">3</div>
<div class="t" style="left: 163px; top: 295.6px; font-size: 8px; color: rgb(85, 85, 85); font-weight: 400; font-family: &quot;Liberation Sans&quot;; transform-origin: 0px 50%; transform: scaleX(1.011);">4</div>
<div class="t" style="left: 163px; top: 346.1px; font-size: 8px; color: rgb(85, 85, 85); font-weight: 400; font-family: &quot;Liberation Sans&quot;; transform-origin: 0px 50%; transform: scaleX(1.011);">5</div>
<div class="t" style="left: 163px; top: 397.1px; font-size: 8px; color: rgb(85, 85, 85); font-weight: 400; font-family: &quot;Liberation Sans&quot;; transform-origin: 0px 50%; transform: scaleX(1.011);">6</div>
<div class="a" style="left:311px;top:141px;width:503px;height:283px;overflow:hidden"><div class="a" style="left:0px;top:0px;width:503px;height:283px;background:linear-gradient(180deg,#ffffff 0%,#fdfefe 38%,#eef4f6 62%,#d9e8ee 85%,#cde1e9 100%);"></div>
<svg class="a" style="left:0px;top:0px;" width="503" height="283" viewBox="0 0 503 283">
<path d="M119 53 L64 89" stroke="#f0f3f5" stroke-width="0.8" fill="none"></path>
<path d="M26 53 Q0 168 58 283" stroke="#2d5672" stroke-width="1" fill="none"></path>
<path d="M7 95 Q15 189 50 283" stroke="#2d5672" stroke-width="1" fill="none"></path>
<path d="M7 139 Q13 211 43 283" stroke="#b9c6cc" stroke-width="1" fill="none"></path>
<path d="M57 181 Q29 219 47 283" stroke="#2d5672" stroke-width="1" fill="none"></path>
<path d="M45 164 Q29 189 35 244" stroke="#c4ccd0" stroke-width="1" fill="none"></path>
</svg>
<div class="a" style="left:0px;top:0px;width:7px;height:283px;background:#2b5574;"></div>
<svg class="a" style="left:0px;top:29px;" width="66" height="22" viewBox="0 0 66 22"><path d="M0 0.6 H55.7 L65 11 L55.7 21 H0 Z" fill="#333333"></path></svg>
<div class="t" style="left: 247.8px; top: 31px; font-size: 18px; color: rgb(67, 147, 174); font-weight: 400; font-family: &quot;Liberation Sans&quot;; transform-origin: 0px 50%; transform: scaleX(0.989);">Key issues</div>
<div class="a" style="left:44px;top:88px;width:449px;height:82.5px;background:#cfcfcf;border-radius:9px"></div>
<div class="a" style="left:57.8px;top:99px;width:131.2px;height:61.5px;border-radius:5px;overflow:hidden;background:radial-gradient(ellipse 90px 50px at 80px 22px,#3a90de 0%,#1f6cc4 50%,#12468e 100%)">
<svg class="a" style="left:0;top:0" width="131" height="62" viewBox="0 0 131 62">
<rect x="0" y="54" width="131" height="8" fill="#0b1a33"></rect>
<path d="M17 2 A25 25 0 0 0 27 46" stroke="#a8b890" stroke-width="1.5" fill="none"></path>
<ellipse cx="33" cy="55" rx="14" ry="2.4" fill="#111"></ellipse>
<rect x="31.5" y="43" width="3" height="12" fill="#161616"></rect>
<defs><clipPath id="gl"><circle cx="32" cy="20.5" r="22.5"></circle></clipPath><radialGradient id="gsh" cx="0.35" cy="0.35" r="0.7"><stop offset="0.5" stop-color="#fff" stop-opacity="0"></stop><stop offset="1" stop-color="#000" stop-opacity="0.45"></stop></radialGradient></defs>
<g clip-path="url(#gl)"><rect x="9" y="-2" width="47" height="46" fill="#c89aa0"></rect><rect x="6.3" y="-2" width="4.5" height="3.6" fill="#f0c030"></rect><rect x="7.9" y="-2" width="0.9" height="3.6" fill="#f4f4f4"></rect><rect x="6.3" y="-0.6000000000000001" width="4.5" height="0.9" fill="#f4f4f4"></rect><rect x="11.2" y="-2" width="6.9" height="3.6" fill="#d83030"></rect><rect x="18.5" y="-2" width="4.2" height="3.6" fill="#1a2a6a"></rect><rect x="20.0" y="-2" width="0.8" height="3.6" fill="#f4f4f4"></rect><rect x="18.5" y="-0.6000000000000001" width="4.2" height="0.9" fill="#f4f4f4"></rect><rect x="23.1" y="-2" width="4.3" height="3.6" fill="#e6d6d8"></rect><rect x="24.6" y="-2" width="0.9" height="3.6" fill="#f4f4f4"></rect><rect x="23.1" y="-0.6000000000000001" width="4.3" height="0.9" fill="#f4f4f4"></rect><rect x="27.8" y="-2" width="4.3" height="3.6" fill="#e6d6d8"></rect><rect x="29.3" y="-2" width="0.9" height="3.6" fill="#f4f4f4"></rect><rect x="27.8" y="-0.6000000000000001" width="4.3" height="0.9" fill="#f4f4f4"></rect><rect x="32.5" y="-2" width="6.0" height="3.6" fill="#d83030"></rect><rect x="38.9" y="-2" width="6.0" height="3.6" fill="#d83030"></rect><rect x="45.3" y="-2" width="5.4" height="3.6" fill="#d83030"></rect><rect x="47.2" y="-2" width="1.1" height="3.6" fill="#f4f4f4"></rect><rect x="45.3" y="-0.6000000000000001" width="5.4" height="0.9" fill="#f4f4f4"></rect><rect x="51.1" y="-2" width="7.0" height="3.6" fill="#e6d6d8"></rect><rect x="7.2" y="2" width="6.0" height="3.6" fill="#1a2a6a"></rect><rect x="13.6" y="2" width="4.6" height="3.6" fill="#3a9a40"></rect><rect x="18.6" y="2" width="4.7" height="3.6" fill="#d83030"></rect><rect x="23.7" y="2" width="4.2" height="3.6" fill="#d83030"></rect><rect x="28.3" y="2" width="5.7" height="3.6" fill="#1a2a6a"></rect><rect x="34.4" y="2" width="5.1" height="3.6" fill="#3a9a40"></rect><rect x="39.9" y="2" width="5.3" height="3.6" fill="#d83030"></rect><rect x="45.6" y="2" width="6.4" height="3.6" fill="#d83030"></rect><rect x="47.8" y="2" width="1.3" height="3.6" fill="#f4f4f4"></rect><rect x="45.6" y="3.4" width="6.4" height="0.9" fill="#f4f4f4"></rect><rect x="52.4" y="2" width="5.1" height="3.6" fill="#2a4aa0"></rect><rect x="7.9" y="6" width="5.0" height="3.6" fill="#d83030"></rect><rect x="9.7" y="6" width="1.0" height="3.6" fill="#f4f4f4"></rect><rect x="7.9" y="7.4" width="5.0" height="0.9" fill="#f4f4f4"></rect><rect x="13.3" y="6" width="5.5" height="3.6" fill="#e0e0e8"></rect><rect x="19.2" y="6" width="7.3" height="3.6" fill="#e6d6d8"></rect><rect x="21.7" y="6" width="1.5" height="3.6" fill="#f4f4f4"></rect><rect x="19.2" y="7.4" width="7.3" height="0.9" fill="#f4f4f4"></rect><rect x="26.9" y="6" width="6.3" height="3.6" fill="#e0e0e8"></rect><rect x="33.6" y="6" width="6.8" height="3.6" fill="#e6d6d8"></rect><rect x="40.8" y="6" width="5.2" height="3.6" fill="#2a4aa0"></rect><rect x="46.4" y="6" width="5.6" height="3.6" fill="#d83030"></rect><rect x="52.4" y="6" width="5.7" height="3.6" fill="#f0c030"></rect><rect x="54.4" y="6" width="1.1" height="3.6" fill="#f4f4f4"></rect><rect x="52.4" y="7.4" width="5.7" height="0.9" fill="#f4f4f4"></rect><rect x="7.9" y="10" width="5.1" height="3.6" fill="#3a9a40"></rect><rect x="13.4" y="10" width="6.9" height="3.6" fill="#e6d6d8"></rect><rect x="20.7" y="10" width="7.1" height="3.6" fill="#e6d6d8"></rect><rect x="23.2" y="10" width="1.4" height="3.6" fill="#f4f4f4"></rect><rect x="20.7" y="11.4" width="7.1" height="0.9" fill="#f4f4f4"></rect><rect x="28.2" y="10" width="5.6" height="3.6" fill="#d83030"></rect><rect x="34.2" y="10" width="5.7" height="3.6" fill="#d83030"></rect><rect x="40.3" y="10" width="4.5" height="3.6" fill="#d83030"></rect><rect x="45.2" y="10" width="7.2" height="3.6" fill="#2a4aa0"></rect><rect x="47.7" y="10" width="1.4" height="3.6" fill="#f4f4f4"></rect><rect x="45.2" y="11.4" width="7.2" height="0.9" fill="#f4f4f4"></rect><rect x="52.8" y="10" width="5.6" height="3.6" fill="#1a2a6a"></rect><rect x="54.7" y="10" width="1.1" height="3.6" fill="#f4f4f4"></rect><rect x="52.8" y="11.4" width="5.6" height="0.9" fill="#f4f4f4"></rect><rect x="5.5" y="14" width="5.5" height="3.6" fill="#1a2a6a"></rect><rect x="7.5" y="14" width="1.1" height="3.6" fill="#f4f4f4"></rect><rect x="5.5" y="15.4" width="5.5" height="0.9" fill="#f4f4f4"></rect><rect x="11.5" y="14" width="5.5" height="3.6" fill="#e6d6d8"></rect><rect x="17.3" y="14" width="5.3" height="3.6" fill="#d83030"></rect><rect x="19.2" y="14" width="1.1" height="3.6" fill="#f4f4f4"></rect><rect x="17.3" y="15.4" width="5.3" height="0.9" fill="#f4f4f4"></rect><rect x="23.0" y="14" width="4.6" height="3.6" fill="#d83030"></rect><rect x="28.1" y="14" width="4.0" height="3.6" fill="#3a9a40"></rect><rect x="29.5" y="14" width="0.8" height="3.6" fill="#f4f4f4"></rect><rect x="28.1" y="15.4" width="4.0" height="0.9" fill="#f4f4f4"></rect><rect x="32.5" y="14" width="5.0" height="3.6" fill="#d83030"></rect><rect x="37.9" y="14" width="5.3" height="3.6" fill="#3a9a40"></rect><rect x="43.6" y="14" width="4.4" height="3.6" fill="#1a2a6a"></rect><rect x="48.4" y="14" width="6.3" height="3.6" fill="#c02828"></rect><rect x="50.6" y="14" width="1.3" height="3.6" fill="#f4f4f4"></rect><rect x="48.4" y="15.4" width="6.3" height="0.9" fill="#f4f4f4"></rect><rect x="55.1" y="14" width="7.1" height="3.6" fill="#e0e0e8"></rect><rect x="7.7" y="18" width="6.0" height="3.6" fill="#e6d6d8"></rect><rect x="14.1" y="18" width="4.4" height="3.6" fill="#f0c030"></rect><rect x="18.8" y="18" width="4.7" height="3.6" fill="#d83030"></rect><rect x="23.9" y="18" width="4.4" height="3.6" fill="#3a9a40"></rect><rect x="25.4" y="18" width="0.9" height="3.6" fill="#f4f4f4"></rect><rect x="23.9" y="19.4" width="4.4" height="0.9" fill="#f4f4f4"></rect><rect x="28.7" y="18" width="4.0" height="3.6" fill="#d83030"></rect><rect x="33.1" y="18" width="7.3" height="3.6" fill="#3a9a40"></rect><rect x="35.7" y="18" width="1.5" height="3.6" fill="#f4f4f4"></rect><rect x="33.1" y="19.4" width="7.3" height="0.9" fill="#f4f4f4"></rect><rect x="40.8" y="18" width="7.1" height="3.6" fill="#3a9a40"></rect><rect x="48.3" y="18" width="6.2" height="3.6" fill="#e6d6d8"></rect><rect x="54.9" y="18" width="5.7" height="3.6" fill="#d83030"></rect><rect x="9.0" y="22" width="5.6" height="3.6" fill="#2a4aa0"></rect><rect x="15.0" y="22" width="4.5" height="3.6" fill="#c02828"></rect><rect x="19.9" y="22" width="4.9" height="3.6" fill="#c02828"></rect><rect x="21.6" y="22" width="1.0" height="3.6" fill="#f4f4f4"></rect><rect x="19.9" y="23.4" width="4.9" height="0.9" fill="#f4f4f4"></rect><rect x="25.2" y="22" width="4.1" height="3.6" fill="#1a2a6a"></rect><rect x="29.7" y="22" width="6.4" height="3.6" fill="#d83030"></rect><rect x="36.5" y="22" width="5.0" height="3.6" fill="#f0c030"></rect><rect x="42.0" y="22" width="6.4" height="3.6" fill="#e6d6d8"></rect><rect x="48.8" y="22" width="7.2" height="3.6" fill="#e6d6d8"></rect><rect x="7.1" y="26" width="6.7" height="3.6" fill="#e6d6d8"></rect><rect x="14.3" y="26" width="6.1" height="3.6" fill="#e0e0e8"></rect><rect x="20.8" y="26" width="7.0" height="3.6" fill="#e0e0e8"></rect><rect x="23.2" y="26" width="1.4" height="3.6" fill="#f4f4f4"></rect><rect x="20.8" y="27.4" width="7.0" height="0.9" fill="#f4f4f4"></rect><rect x="28.2" y="26" width="5.4" height="3.6" fill="#e0e0e8"></rect><rect x="30.1" y="26" width="1.1" height="3.6" fill="#f4f4f4"></rect><rect x="28.2" y="27.4" width="5.4" height="0.9" fill="#f4f4f4"></rect><rect x="34.0" y="26" width="5.8" height="3.6" fill="#e6d6d8"></rect><rect x="40.2" y="26" width="7.5" height="3.6" fill="#e0e0e8"></rect><rect x="42.8" y="26" width="1.5" height="3.6" fill="#f4f4f4"></rect><rect x="40.2" y="27.4" width="7.5" height="0.9" fill="#f4f4f4"></rect><rect x="48.1" y="26" width="4.9" height="3.6" fill="#c02828"></rect><rect x="53.4" y="26" width="5.2" height="3.6" fill="#e0e0e8"></rect><rect x="9.0" y="30" width="7.3" height="3.6" fill="#e6d6d8"></rect><rect x="11.5" y="30" width="1.5" height="3.6" fill="#f4f4f4"></rect><rect x="9.0" y="31.4" width="7.3" height="0.9" fill="#f4f4f4"></rect><rect x="16.7" y="30" width="4.4" height="3.6" fill="#2a4aa0"></rect><rect x="18.2" y="30" width="0.9" height="3.6" fill="#f4f4f4"></rect><rect x="16.7" y="31.4" width="4.4" height="0.9" fill="#f4f4f4"></rect><rect x="21.5" y="30" width="4.7" height="3.6" fill="#3a9a40"></rect><rect x="26.6" y="30" width="6.1" height="3.6" fill="#d83030"></rect><rect x="33.1" y="30" width="6.3" height="3.6" fill="#e0e0e8"></rect><rect x="39.8" y="30" width="6.9" height="3.6" fill="#d83030"></rect><rect x="47.1" y="30" width="6.7" height="3.6" fill="#e0e0e8"></rect><rect x="49.5" y="30" width="1.3" height="3.6" fill="#f4f4f4"></rect><rect x="47.1" y="31.4" width="6.7" height="0.9" fill="#f4f4f4"></rect><rect x="54.2" y="30" width="7.1" height="3.6" fill="#e6d6d8"></rect><rect x="6.3" y="34" width="6.8" height="3.6" fill="#c02828"></rect><rect x="13.5" y="34" width="5.4" height="3.6" fill="#d83030"></rect><rect x="19.3" y="34" width="4.6" height="3.6" fill="#d83030"></rect><rect x="20.9" y="34" width="0.9" height="3.6" fill="#f4f4f4"></rect><rect x="19.3" y="35.4" width="4.6" height="0.9" fill="#f4f4f4"></rect><rect x="24.3" y="34" width="6.1" height="3.6" fill="#2a4aa0"></rect><rect x="30.8" y="34" width="4.5" height="3.6" fill="#3a9a40"></rect><rect x="35.7" y="34" width="6.3" height="3.6" fill="#e6d6d8"></rect><rect x="37.9" y="34" width="1.3" height="3.6" fill="#f4f4f4"></rect><rect x="35.7" y="35.4" width="6.3" height="0.9" fill="#f4f4f4"></rect><rect x="42.4" y="34" width="5.9" height="3.6" fill="#d83030"></rect><rect x="44.5" y="34" width="1.2" height="3.6" fill="#f4f4f4"></rect><rect x="42.4" y="35.4" width="5.9" height="0.9" fill="#f4f4f4"></rect><rect x="48.7" y="34" width="7.4" height="3.6" fill="#f0c030"></rect><rect x="51.3" y="34" width="1.5" height="3.6" fill="#f4f4f4"></rect><rect x="48.7" y="35.4" width="7.4" height="0.9" fill="#f4f4f4"></rect><rect x="8.0" y="38" width="4.5" height="3.6" fill="#d83030"></rect><rect x="12.9" y="38" width="4.7" height="3.6" fill="#e6d6d8"></rect><rect x="14.5" y="38" width="0.9" height="3.6" fill="#f4f4f4"></rect><rect x="12.9" y="39.4" width="4.7" height="0.9" fill="#f4f4f4"></rect><rect x="18.0" y="38" width="5.8" height="3.6" fill="#e0e0e8"></rect><rect x="24.2" y="38" width="4.9" height="3.6" fill="#e6d6d8"></rect><rect x="29.5" y="38" width="4.2" height="3.6" fill="#c02828"></rect><rect x="34.1" y="38" width="5.6" height="3.6" fill="#3a9a40"></rect><rect x="40.1" y="38" width="5.8" height="3.6" fill="#1a2a6a"></rect><rect x="42.1" y="38" width="1.2" height="3.6" fill="#f4f4f4"></rect><rect x="40.1" y="39.4" width="5.8" height="0.9" fill="#f4f4f4"></rect><rect x="46.3" y="38" width="4.5" height="3.6" fill="#1a2a6a"></rect><rect x="47.9" y="38" width="0.9" height="3.6" fill="#f4f4f4"></rect><rect x="46.3" y="39.4" width="4.5" height="0.9" fill="#f4f4f4"></rect><rect x="51.2" y="38" width="5.5" height="3.6" fill="#d83030"></rect><rect x="8.1" y="42" width="4.5" height="3.6" fill="#d83030"></rect><rect x="13.0" y="42" width="6.5" height="3.6" fill="#1a2a6a"></rect><rect x="15.3" y="42" width="1.3" height="3.6" fill="#f4f4f4"></rect><rect x="13.0" y="43.4" width="6.5" height="0.9" fill="#f4f4f4"></rect><rect x="20.0" y="42" width="6.4" height="3.6" fill="#1a2a6a"></rect><rect x="26.8" y="42" width="6.7" height="3.6" fill="#d83030"></rect><rect x="33.9" y="42" width="4.2" height="3.6" fill="#d83030"></rect><rect x="35.4" y="42" width="0.8" height="3.6" fill="#f4f4f4"></rect><rect x="33.9" y="43.4" width="4.2" height="0.9" fill="#f4f4f4"></rect><rect x="38.5" y="42" width="6.7" height="3.6" fill="#1a2a6a"></rect><rect x="45.6" y="42" width="4.1" height="3.6" fill="#d83030"></rect><rect x="50.1" y="42" width="6.1" height="3.6" fill="#1a2a6a"></rect></g>
<circle cx="32" cy="20.5" r="22.5" fill="url(#gsh)"></circle>
<path d="M30 57 L66 42" stroke="#7a3a18" stroke-width="3.5" stroke-linecap="round"></path>
<ellipse cx="87" cy="52" rx="29" ry="7.5" fill="#6a3016"></ellipse>
<rect x="58" y="46" width="58" height="8" fill="#83411e"></rect>
<ellipse cx="87" cy="46" rx="29" ry="5" fill="#a65a2e"></ellipse>
<ellipse cx="78" cy="35" rx="13" ry="11" fill="#8e4820"></ellipse>
<rect x="80" y="25" width="11" height="21" fill="#c9b070"></rect>
<ellipse cx="92" cy="35" rx="6" ry="10.5" fill="#9a5226"></ellipse>
<ellipse cx="72" cy="33" rx="6" ry="8" fill="#b46a38"></ellipse>
</svg></div>
<div class="a" style="left:203px;top:99px;width:131.3px;height:61.5px;border-radius:5px;overflow:hidden;background:#f4f4f4">
<svg class="a" style="left:0;top:0" width="131" height="62" viewBox="0 0 131 62">
<path d="M0 0 H16 L0 6 Z" fill="#8a5a34"></path>
<path d="M58 0 H100 V20 Z" fill="#a87240"></path>
<path d="M96 0 H131 V44 C120 46 100 40 98 22 Z" fill="#161616"></path>
<ellipse cx="117" cy="16" rx="13" ry="17" fill="#2a2a2a"></ellipse>
<ellipse cx="119" cy="14" rx="8" ry="11" fill="#1a1a1a"></ellipse>
<text x="0" y="0" transform="translate(33 12) rotate(29)" font-family="Liberation Serif" font-weight="700" font-size="22" fill="#141414" textLength="102" lengthAdjust="spacingAndGlyphs">Case Law</text>
<path d="M52 41 L72 50" stroke="#555" stroke-width="0.9"></path>
<path d="M40 50 L60 59" stroke="#aaa" stroke-width="0.6"></path>
<path d="M3 16 L14 10 L15 13 L4 19 Z" fill="#c8b070"></path>
<path d="M-4 44 L18 22 C26 15 38 20 38 30 C38 36 34 40 28 44 L8 62 H-4 Z" fill="#151515"></path>
<path d="M4 38 L22 22 L32 40 L14 55 Z" fill="#b9a05a"></path>
<path d="M8 38 L21 27 L27 36 L13 47 Z" fill="#d9c68a"></path>
<ellipse cx="30" cy="30" rx="7" ry="12" transform="rotate(-35 30 30)" fill="#1c1c1c"></ellipse>
<path d="M22 50 L32 62 H40 L28 47 Z" fill="#121212"></path>
</svg></div>
<div class="a" style="left:347.3px;top:99px;width:131.9px;height:61.5px;border-radius:5px;overflow:hidden;background:#f0f0f0">
<svg class="a" style="left:0;top:0" width="132" height="62" viewBox="0 0 132 62">
<path d="M50 1.5 C55 0.5 58 4 56 10 C54 16 52 21 50 26 L62 28 C67 29 67 34 63 36 C67 38 66 43 62 45 C66 47 64 52 60 53 C63 56 61 62 56 62 L20 62 C10 62 3 56 2 46 C1 36 5 29 15 28 C25 27 34 20 41 10 C44 4 46 2 50 1.5 Z" fill="#3a9140" stroke="#163a18" stroke-width="2"></path>
<path d="M50 26 C44 27 40 30 42 34 L62 36 M42 34 C38 38 41 44 46 45 L62 45 M46 45 C42 48 44 53 48 53 L60 53" stroke="#163a18" stroke-width="1.8" fill="none"></path>
<path d="M82 61 C77 61 74 57 76 51 C78 45 80 39 82 35 L71 33 C66 32 66 27 70 25 C66 23 67 18 71 16 C67 14 69 9 73 8 C70 5 72 0.5 77 0.5 L111 0.5 C121 0.5 129 6 130 16 C131 26 127 33 117 34 C107 35 97 41 90 51 C87 57 86 61 82 61 Z" fill="#f45252" stroke="#4a1212" stroke-width="2"></path>
<path d="M82 35 C88 34 92 31 90 27 L70 25 M90 27 C94 23 91 17 86 16 L71 16 M86 16 C90 13 88 8 84 8 L73 8" stroke="#4a1212" stroke-width="1.8" fill="none"></path>
</svg></div>
<div class="a" style="left:58px;top:172.3px;width:131.6px;height:101.7px;background:#333333;border-radius:0 0 9px 9px"></div>
<div class="a" style="left:203px;top:172.3px;width:131.6px;height:101.7px;background:#333333;border-radius:0 0 9px 9px"></div>
<div class="a" style="left:347.2px;top:172.3px;width:131.6px;height:101.7px;background:#333333;border-radius:0 0 9px 9px"></div>
<div class="t" style="left: 107.9px; top: 180.87px; font-size: 12.6px; color: rgb(230, 230, 230); font-weight: 400; font-family: &quot;Liberation Sans&quot;; transform-origin: 0px 50%; transform: scaleX(1.088);">Does</div>
<div class="t" style="left: 70.8px; top: 195.47px; font-size: 12.6px; color: rgb(230, 230, 230); font-weight: 400; font-family: &quot;Liberation Sans&quot;; transform-origin: 0px 50%; transform: scaleX(1.158);">international law</div>
<div class="t" style="left: 82.3px; top: 210.37px; font-size: 12.6px; color: rgb(230, 230, 230); font-weight: 400; font-family: &quot;Liberation Sans&quot;; transform-origin: 0px 50%; transform: scaleX(1.158);">provide for a</div>
<div class="t" style="left: 77.2px; top: 224.87px; font-size: 12.6px; color: rgb(230, 230, 230); font-weight: 400; font-family: &quot;Liberation Sans&quot;; transform-origin: 0px 50%; transform: scaleX(1.134);">right to access</div>
<div class="t" style="left: 83.6px; top: 239.47px; font-size: 12.6px; color: rgb(230, 230, 230); font-weight: 400; font-family: &quot;Liberation Sans&quot;; transform-origin: 0px 50%; transform: scaleX(1.112);">the territory?</div>
<div class="t" style="left: 233.7px; top: 180.87px; font-size: 12.6px; color: rgb(230, 230, 230); font-weight: 400; font-family: &quot;Liberation Sans&quot;; transform-origin: 0px 50%; transform: scaleX(1.097);">What is the</div>
<div class="t" style="left: 218.8px; top: 195.47px; font-size: 12.6px; color: rgb(230, 230, 230); font-weight: 400; font-family: &quot;Liberation Sans&quot;; transform-origin: 0px 50%; transform: scaleX(1.164);">content of such</div>
<div class="t" style="left: 243.9px; top: 210.37px; font-size: 12.6px; color: rgb(230, 230, 230); font-weight: 400; font-family: &quot;Liberation Sans&quot;; transform-origin: 0px 50%; transform: scaleX(1.159);">a right?</div>
<div class="t" style="left: 231.9px; top: 230.47px; font-size: 12.6px; color: rgb(230, 230, 230); font-weight: 400; font-family: &quot;Liberation Sans&quot;; transform-origin: 0px 50%; transform: scaleX(1.105);">- elements?</div>
<div class="t" style="left: 245px; top: 249.97px; font-size: 12.6px; color: rgb(230, 230, 230); font-weight: 400; font-family: &quot;Liberation Sans&quot;; transform-origin: 0px 50%; transform: scaleX(1.06);">- limits?</div>
<div class="t" style="left: 391px; top: 180.67px; font-size: 12.6px; color: rgb(230, 230, 230); font-weight: 400; font-family: &quot;Liberation Sans&quot;; transform-origin: 0px 50%; transform: scaleX(1.169);">Critical</div>
<div class="t" style="left: 371px; top: 195.17px; font-size: 12.6px; color: rgb(230, 230, 230); font-weight: 400; font-family: &quot;Liberation Sans&quot;; transform-origin: 0px 50%; transform: scaleX(1.19);">evaluation of</div>
<div class="t" style="left: 382.8px; top: 209.47px; font-size: 12.6px; color: rgb(230, 230, 230); font-weight: 400; font-family: &quot;Liberation Sans&quot;; transform-origin: 0px 50%; transform: scaleX(1.19);">identified</div>
<div class="t" style="left: 376.6px; top: 224.47px; font-size: 12.6px; color: rgb(230, 230, 230); font-weight: 400; font-family: &quot;Liberation Sans&quot;; transform-origin: 0px 50%; transform: scaleX(1.115);">standards –</div>
<div class="t" style="left: 381.9px; top: 239.17px; font-size: 12.6px; color: rgb(230, 230, 230); font-weight: 400; font-family: &quot;Liberation Sans&quot;; transform-origin: 0px 50%; transform: scaleX(1.148);">pros/cons</div></div>
<svg class="a" style="left:515px;top:323px;" width="6" height="8" viewBox="0 0 6 8"><path d="M0.5 0.5 V6.5 L2 5.2 L3.2 7.5 L4.2 7 L3 4.8 L5 4.6 Z" fill="#fff" stroke="#222" stroke-width="0.6"></path></svg>
<div class="a" style="left:172.8px;top:146.4px;width:503px;height:280.1px;overflow:hidden;transform:scale(0.1467);transform-origin:0 0"><div class="a" style="left:0;top:0;width:503px;height:283px;background:linear-gradient(180deg,#ffffff 0%,#fdfefe 38%,#eef4f6 62%,#d9e8ee 85%,#cde1e9 100%)"></div>
<svg class="a" style="left:0;top:0" width="503" height="283" viewBox="0 0 503 283">
<path d="M26 53 Q0 168 58 283" stroke="#5a7a92" stroke-width="3.5" fill="none"></path>
<path d="M7 95 Q15 189 50 283" stroke="#5a7a92" stroke-width="3.5" fill="none"></path>
<path d="M7 139 Q13 211 43 283" stroke="#c9d6dc" stroke-width="3.5" fill="none"></path>
</svg>
<div class="a" style="left:0;top:0;width:10px;height:283px;background:#2b5574"></div>
<svg class="a" style="left:0;top:178px" width="66" height="22" viewBox="0 0 66 22"><path d="M0 0.6 H55.7 L65 11 L55.7 21 H0 Z" fill="#333333"></path></svg></div>
<div class="t" style="left: 183.4px; top: 150.09px; font-size: 3.3px; color: rgb(58, 138, 170); font-weight: 700; font-family: &quot;Liberation Sans&quot;; transform-origin: 0px 50%; transform: scaleX(0.744);">RIGHT OF PERSONS IN NEED OF</div>
<div class="t" style="left: 183.4px; top: 153.78px; font-size: 3.3px; color: rgb(58, 138, 170); font-weight: 700; font-family: &quot;Liberation Sans&quot;; transform-origin: 0px 50%; transform: scaleX(0.771);">INTERNATIONAL PROTECTION TO</div>
<div class="t" style="left: 183.4px; top: 157.48px; font-size: 3.3px; color: rgb(58, 138, 170); font-weight: 700; font-family: &quot;Liberation Sans&quot;; transform-origin: 0px 50%; transform: scaleX(0.892);">ACCESS THE TERRITORY: (DIS)CLEAR</div>
<div class="t" style="left: 183.4px; top: 161.19px; font-size: 3.3px; color: rgb(58, 138, 170); font-weight: 700; font-family: &quot;Liberation Sans&quot;; transform-origin: 0px 50%; transform: scaleX(0.84);">STANDARDS OF THE EUROPEAN COURT</div>
<div class="t" style="left: 183.4px; top: 164.88px; font-size: 3.3px; color: rgb(58, 138, 170); font-weight: 700; font-family: &quot;Liberation Sans&quot;; transform-origin: 0px 50%; transform: scaleX(0.861);">OF HUMAN RIGHTS</div>
<div class="t" style="left: 201px; top: 176.25px; font-size: 3px; color: rgb(102, 102, 102); font-weight: 400; font-family: &quot;Liberation Sans&quot;; transform-origin: 0px 50%; transform: scaleX(0.772);">Prof. dr. Bojana Čučković</div>
<div class="t" style="left: 195.6px; top: 179.95px; font-size: 3px; color: rgb(102, 102, 102); font-weight: 400; font-family: &quot;Liberation Sans&quot;; transform-origin: 0px 50%; transform: scaleX(0.755);">University of Belgrade Faculty of Law</div>
<div class="a" style="left:173.5px;top:197px;width:503px;height:276.8px;overflow:hidden;transform:scale(0.1445);transform-origin:0 0"><div class="a" style="left:0;top:0;width:503px;height:283px;background:linear-gradient(180deg,#ffffff 0%,#fdfefe 38%,#eef4f6 62%,#d9e8ee 85%,#cde1e9 100%)"></div>
<svg class="a" style="left:0;top:0" width="503" height="283" viewBox="0 0 503 283">
<path d="M26 53 Q0 168 58 283" stroke="#5a7a92" stroke-width="3.5" fill="none"></path>
<path d="M7 95 Q15 189 50 283" stroke="#5a7a92" stroke-width="3.5" fill="none"></path>
<path d="M7 139 Q13 211 43 283" stroke="#c9d6dc" stroke-width="3.5" fill="none"></path>
</svg>
<div class="a" style="left:0;top:0;width:10px;height:283px;background:#2b5574"></div>
<svg class="a" style="left:0;top:29px" width="66" height="22" viewBox="0 0 66 22"><path d="M0 0.6 H55.7 L65 11 L55.7 21 H0 Z" fill="#333333"></path></svg></div>
<div class="a" style="left:183.8px;top:198.6px;width:62.4px;height:37.4px;background:#eeeeec;overflow:hidden;">
<div class="a" style="left:0px;top:0px;width:14px;height:37.4px;background:#cdcdcb;"></div>
<div class="a" style="left:13.5px;top:0px;width:1.2px;height:37.4px;background:#a4a4a2;"></div>
<div class="a" style="left:14.7px;top:0px;width:12px;height:37.4px;background:#e6e6e4;"></div>
<div class="a" style="left:26px;top:14px;width:36px;height:4px;background:#dcdcda;"></div>
<svg class="a" style="left:0;top:0" width="63" height="38"><path d="M29 26 C27 10 34 1.5 40 1.5 C47 1.5 52 8 51 20 L50 27 Z" fill="#1a1616"></path><ellipse cx="43.5" cy="18.5" rx="6" ry="8" fill="#d6b4a4"></ellipse><path d="M36 9 C40 5 48 6 50 12 C46 9 40 9 36 12 Z" fill="#1a1616"></path><path d="M19 37.4 C20 29 24 25 30 24 L34 37.4 Z" fill="#857460"></path><path d="M25 37.4 C26 28 32 24 40 24 C48 24 55 28 56 37.4 Z" fill="#8c2242"></path><rect x="51.5" y="25" width="5" height="12.4" fill="#e2cac2"></rect><rect x="56.8" y="18" width="5.6" height="19.4" fill="#c02a44"></rect></svg>
</div>
<div class="a" style="left:171.9px;top:245.5px;width:76.1px;height:44.3px;background:#b8806e;"></div>
<div class="a" style="left:173.5px;top:247.8px;width:503px;height:283px;overflow:hidden;transform:scale(0.1442);transform-origin:0 0"><div class="a" style="left:0px;top:0px;width:503px;height:283px;background:linear-gradient(180deg,#ffffff 0%,#fdfefe 38%,#eef4f6 62%,#d9e8ee 85%,#cde1e9 100%);"></div>
<svg class="a" style="left:0px;top:0px;" width="503" height="283" viewBox="0 0 503 283">
<path d="M119 53 L64 89" stroke="#f0f3f5" stroke-width="0.8" fill="none"></path>
<path d="M26 53 Q0 168 58 283" stroke="#2d5672" stroke-width="1" fill="none"></path>
<path d="M7 95 Q15 189 50 283" stroke="#2d5672" stroke-width="1" fill="none"></path>
<path d="M7 139 Q13 211 43 283" stroke="#b9c6cc" stroke-width="1" fill="none"></path>
<path d="M57 181 Q29 219 47 283" stroke="#2d5672" stroke-width="1" fill="none"></path>
<path d="M45 164 Q29 189 35 244" stroke="#c4ccd0" stroke-width="1" fill="none"></path>
</svg>
<div class="a" style="left:0px;top:0px;width:7px;height:283px;background:#2b5574;"></div>
<svg class="a" style="left:0px;top:29px;" width="66" height="22" viewBox="0 0 66 22"><path d="M0 0.6 H55.7 L65 11 L55.7 21 H0 Z" fill="#333333"></path></svg>
<div class="t" style="left: 247.8px; top: 31px; font-size: 18px; color: rgb(67, 147, 174); font-weight: 400; font-family: &quot;Liberation Sans&quot;; transform-origin: 0px 50%; transform: scaleX(0.989);">Key issues</div>
<div class="a" style="left:44px;top:88px;width:449px;height:82.5px;background:#cfcfcf;border-radius:9px"></div>
<div class="a" style="left:57.8px;top:99px;width:131.2px;height:61.5px;border-radius:5px;overflow:hidden;background:radial-gradient(ellipse 90px 50px at 80px 22px,#3a90de 0%,#1f6cc4 50%,#12468e 100%)">
<svg class="a" style="left:0;top:0" width="131" height="62" viewBox="0 0 131 62">
<rect x="0" y="54" width="131" height="8" fill="#0b1a33"></rect>
<path d="M17 2 A25 25 0 0 0 27 46" stroke="#a8b890" stroke-width="1.5" fill="none"></path>
<ellipse cx="33" cy="55" rx="14" ry="2.4" fill="#111"></ellipse>
<rect x="31.5" y="43" width="3" height="12" fill="#161616"></rect>
<defs><clipPath id="gl"><circle cx="32" cy="20.5" r="22.5"></circle></clipPath><radialGradient id="gsh" cx="0.35" cy="0.35" r="0.7"><stop offset="0.5" stop-color="#fff" stop-opacity="0"></stop><stop offset="1" stop-color="#000" stop-opacity="0.45"></stop></radialGradient></defs>
<g clip-path="url(#gl)"><rect x="9" y="-2" width="47" height="46" fill="#c89aa0"></rect><rect x="6.3" y="-2" width="4.5" height="3.6" fill="#f0c030"></rect><rect x="7.9" y="-2" width="0.9" height="3.6" fill="#f4f4f4"></rect><rect x="6.3" y="-0.6000000000000001" width="4.5" height="0.9" fill="#f4f4f4"></rect><rect x="11.2" y="-2" width="6.9" height="3.6" fill="#d83030"></rect><rect x="18.5" y="-2" width="4.2" height="3.6" fill="#1a2a6a"></rect><rect x="20.0" y="-2" width="0.8" height="3.6" fill="#f4f4f4"></rect><rect x="18.5" y="-0.6000000000000001" width="4.2" height="0.9" fill="#f4f4f4"></rect><rect x="23.1" y="-2" width="4.3" height="3.6" fill="#e6d6d8"></rect><rect x="24.6" y="-2" width="0.9" height="3.6" fill="#f4f4f4"></rect><rect x="23.1" y="-0.6000000000000001" width="4.3" height="0.9" fill="#f4f4f4"></rect><rect x="27.8" y="-2" width="4.3" height="3.6" fill="#e6d6d8"></rect><rect x="29.3" y="-2" width="0.9" height="3.6" fill="#f4f4f4"></rect><rect x="27.8" y="-0.6000000000000001" width="4.3" height="0.9" fill="#f4f4f4"></rect><rect x="32.5" y="-2" width="6.0" height="3.6" fill="#d83030"></rect><rect x="38.9" y="-2" width="6.0" height="3.6" fill="#d83030"></rect><rect x="45.3" y="-2" width="5.4" height="3.6" fill="#d83030"></rect><rect x="47.2" y="-2" width="1.1" height="3.6" fill="#f4f4f4"></rect><rect x="45.3" y="-0.6000000000000001" width="5.4" height="0.9" fill="#f4f4f4"></rect><rect x="51.1" y="-2" width="7.0" height="3.6" fill="#e6d6d8"></rect><rect x="7.2" y="2" width="6.0" height="3.6" fill="#1a2a6a"></rect><rect x="13.6" y="2" width="4.6" height="3.6" fill="#3a9a40"></rect><rect x="18.6" y="2" width="4.7" height="3.6" fill="#d83030"></rect><rect x="23.7" y="2" width="4.2" height="3.6" fill="#d83030"></rect><rect x="28.3" y="2" width="5.7" height="3.6" fill="#1a2a6a"></rect><rect x="34.4" y="2" width="5.1" height="3.6" fill="#3a9a40"></rect><rect x="39.9" y="2" width="5.3" height="3.6" fill="#d83030"></rect><rect x="45.6" y="2" width="6.4" height="3.6" fill="#d83030"></rect><rect x="47.8" y="2" width="1.3" height="3.6" fill="#f4f4f4"></rect><rect x="45.6" y="3.4" width="6.4" height="0.9" fill="#f4f4f4"></rect><rect x="52.4" y="2" width="5.1" height="3.6" fill="#2a4aa0"></rect><rect x="7.9" y="6" width="5.0" height="3.6" fill="#d83030"></rect><rect x="9.7" y="6" width="1.0" height="3.6" fill="#f4f4f4"></rect><rect x="7.9" y="7.4" width="5.0" height="0.9" fill="#f4f4f4"></rect><rect x="13.3" y="6" width="5.5" height="3.6" fill="#e0e0e8"></rect><rect x="19.2" y="6" width="7.3" height="3.6" fill="#e6d6d8"></rect><rect x="21.7" y="6" width="1.5" height="3.6" fill="#f4f4f4"></rect><rect x="19.2" y="7.4" width="7.3" height="0.9" fill="#f4f4f4"></rect><rect x="26.9" y="6" width="6.3" height="3.6" fill="#e0e0e8"></rect><rect x="33.6" y="6" width="6.8" height="3.6" fill="#e6d6d8"></rect><rect x="40.8" y="6" width="5.2" height="3.6" fill="#2a4aa0"></rect><rect x="46.4" y="6" width="5.6" height="3.6" fill="#d83030"></rect><rect x="52.4" y="6" width="5.7" height="3.6" fill="#f0c030"></rect><rect x="54.4" y="6" width="1.1" height="3.6" fill="#f4f4f4"></rect><rect x="52.4" y="7.4" width="5.7" height="0.9" fill="#f4f4f4"></rect><rect x="7.9" y="10" width="5.1" height="3.6" fill="#3a9a40"></rect><rect x="13.4" y="10" width="6.9" height="3.6" fill="#e6d6d8"></rect><rect x="20.7" y="10" width="7.1" height="3.6" fill="#e6d6d8"></rect><rect x="23.2" y="10" width="1.4" height="3.6" fill="#f4f4f4"></rect><rect x="20.7" y="11.4" width="7.1" height="0.9" fill="#f4f4f4"></rect><rect x="28.2" y="10" width="5.6" height="3.6" fill="#d83030"></rect><rect x="34.2" y="10" width="5.7" height="3.6" fill="#d83030"></rect><rect x="40.3" y="10" width="4.5" height="3.6" fill="#d83030"></rect><rect x="45.2" y="10" width="7.2" height="3.6" fill="#2a4aa0"></rect><rect x="47.7" y="10" width="1.4" height="3.6" fill="#f4f4f4"></rect><rect x="45.2" y="11.4" width="7.2" height="0.9" fill="#f4f4f4"></rect><rect x="52.8" y="10" width="5.6" height="3.6" fill="#1a2a6a"></rect><rect x="54.7" y="10" width="1.1" height="3.6" fill="#f4f4f4"></rect><rect x="52.8" y="11.4" width="5.6" height="0.9" fill="#f4f4f4"></rect><rect x="5.5" y="14" width="5.5" height="3.6" fill="#1a2a6a"></rect><rect x="7.5" y="14" width="1.1" height="3.6" fill="#f4f4f4"></rect><rect x="5.5" y="15.4" width="5.5" height="0.9" fill="#f4f4f4"></rect><rect x="11.5" y="14" width="5.5" height="3.6" fill="#e6d6d8"></rect><rect x="17.3" y="14" width="5.3" height="3.6" fill="#d83030"></rect><rect x="19.2" y="14" width="1.1" height="3.6" fill="#f4f4f4"></rect><rect x="17.3" y="15.4" width="5.3" height="0.9" fill="#f4f4f4"></rect><rect x="23.0" y="14" width="4.6" height="3.6" fill="#d83030"></rect><rect x="28.1" y="14" width="4.0" height="3.6" fill="#3a9a40"></rect><rect x="29.5" y="14" width="0.8" height="3.6" fill="#f4f4f4"></rect><rect x="28.1" y="15.4" width="4.0" height="0.9" fill="#f4f4f4"></rect><rect x="32.5" y="14" width="5.0" height="3.6" fill="#d83030"></rect><rect x="37.9" y="14" width="5.3" height="3.6" fill="#3a9a40"></rect><rect x="43.6" y="14" width="4.4" height="3.6" fill="#1a2a6a"></rect><rect x="48.4" y="14" width="6.3" height="3.6" fill="#c02828"></rect><rect x="50.6" y="14" width="1.3" height="3.6" fill="#f4f4f4"></rect><rect x="48.4" y="15.4" width="6.3" height="0.9" fill="#f4f4f4"></rect><rect x="55.1" y="14" width="7.1" height="3.6" fill="#e0e0e8"></rect><rect x="7.7" y="18" width="6.0" height="3.6" fill="#e6d6d8"></rect><rect x="14.1" y="18" width="4.4" height="3.6" fill="#f0c030"></rect><rect x="18.8" y="18" width="4.7" height="3.6" fill="#d83030"></rect><rect x="23.9" y="18" width="4.4" height="3.6" fill="#3a9a40"></rect><rect x="25.4" y="18" width="0.9" height="3.6" fill="#f4f4f4"></rect><rect x="23.9" y="19.4" width="4.4" height="0.9" fill="#f4f4f4"></rect><rect x="28.7" y="18" width="4.0" height="3.6" fill="#d83030"></rect><rect x="33.1" y="18" width="7.3" height="3.6" fill="#3a9a40"></rect><rect x="35.7" y="18" width="1.5" height="3.6" fill="#f4f4f4"></rect><rect x="33.1" y="19.4" width="7.3" height="0.9" fill="#f4f4f4"></rect><rect x="40.8" y="18" width="7.1" height="3.6" fill="#3a9a40"></rect><rect x="48.3" y="18" width="6.2" height="3.6" fill="#e6d6d8"></rect><rect x="54.9" y="18" width="5.7" height="3.6" fill="#d83030"></rect><rect x="9.0" y="22" width="5.6" height="3.6" fill="#2a4aa0"></rect><rect x="15.0" y="22" width="4.5" height="3.6" fill="#c02828"></rect><rect x="19.9" y="22" width="4.9" height="3.6" fill="#c02828"></rect><rect x="21.6" y="22" width="1.0" height="3.6" fill="#f4f4f4"></rect><rect x="19.9" y="23.4" width="4.9" height="0.9" fill="#f4f4f4"></rect><rect x="25.2" y="22" width="4.1" height="3.6" fill="#1a2a6a"></rect><rect x="29.7" y="22" width="6.4" height="3.6" fill="#d83030"></rect><rect x="36.5" y="22" width="5.0" height="3.6" fill="#f0c030"></rect><rect x="42.0" y="22" width="6.4" height="3.6" fill="#e6d6d8"></rect><rect x="48.8" y="22" width="7.2" height="3.6" fill="#e6d6d8"></rect><rect x="7.1" y="26" width="6.7" height="3.6" fill="#e6d6d8"></rect><rect x="14.3" y="26" width="6.1" height="3.6" fill="#e0e0e8"></rect><rect x="20.8" y="26" width="7.0" height="3.6" fill="#e0e0e8"></rect><rect x="23.2" y="26" width="1.4" height="3.6" fill="#f4f4f4"></rect><rect x="20.8" y="27.4" width="7.0" height="0.9" fill="#f4f4f4"></rect><rect x="28.2" y="26" width="5.4" height="3.6" fill="#e0e0e8"></rect><rect x="30.1" y="26" width="1.1" height="3.6" fill="#f4f4f4"></rect><rect x="28.2" y="27.4" width="5.4" height="0.9" fill="#f4f4f4"></rect><rect x="34.0" y="26" width="5.8" height="3.6" fill="#e6d6d8"></rect><rect x="40.2" y="26" width="7.5" height="3.6" fill="#e0e0e8"></rect><rect x="42.8" y="26" width="1.5" height="3.6" fill="#f4f4f4"></rect><rect x="40.2" y="27.4" width="7.5" height="0.9" fill="#f4f4f4"></rect><rect x="48.1" y="26" width="4.9" height="3.6" fill="#c02828"></rect><rect x="53.4" y="26" width="5.2" height="3.6" fill="#e0e0e8"></rect><rect x="9.0" y="30" width="7.3" height="3.6" fill="#e6d6d8"></rect><rect x="11.5" y="30" width="1.5" height="3.6" fill="#f4f4f4"></rect><rect x="9.0" y="31.4" width="7.3" height="0.9" fill="#f4f4f4"></rect><rect x="16.7" y="30" width="4.4" height="3.6" fill="#2a4aa0"></rect><rect x="18.2" y="30" width="0.9" height="3.6" fill="#f4f4f4"></rect><rect x="16.7" y="31.4" width="4.4" height="0.9" fill="#f4f4f4"></rect><rect x="21.5" y="30" width="4.7" height="3.6" fill="#3a9a40"></rect><rect x="26.6" y="30" width="6.1" height="3.6" fill="#d83030"></rect><rect x="33.1" y="30" width="6.3" height="3.6" fill="#e0e0e8"></rect><rect x="39.8" y="30" width="6.9" height="3.6" fill="#d83030"></rect><rect x="47.1" y="30" width="6.7" height="3.6" fill="#e0e0e8"></rect><rect x="49.5" y="30" width="1.3" height="3.6" fill="#f4f4f4"></rect><rect x="47.1" y="31.4" width="6.7" height="0.9" fill="#f4f4f4"></rect><rect x="54.2" y="30" width="7.1" height="3.6" fill="#e6d6d8"></rect><rect x="6.3" y="34" width="6.8" height="3.6" fill="#c02828"></rect><rect x="13.5" y="34" width="5.4" height="3.6" fill="#d83030"></rect><rect x="19.3" y="34" width="4.6" height="3.6" fill="#d83030"></rect><rect x="20.9" y="34" width="0.9" height="3.6" fill="#f4f4f4"></rect><rect x="19.3" y="35.4" width="4.6" height="0.9" fill="#f4f4f4"></rect><rect x="24.3" y="34" width="6.1" height="3.6" fill="#2a4aa0"></rect><rect x="30.8" y="34" width="4.5" height="3.6" fill="#3a9a40"></rect><rect x="35.7" y="34" width="6.3" height="3.6" fill="#e6d6d8"></rect><rect x="37.9" y="34" width="1.3" height="3.6" fill="#f4f4f4"></rect><rect x="35.7" y="35.4" width="6.3" height="0.9" fill="#f4f4f4"></rect><rect x="42.4" y="34" width="5.9" height="3.6" fill="#d83030"></rect><rect x="44.5" y="34" width="1.2" height="3.6" fill="#f4f4f4"></rect><rect x="42.4" y="35.4" width="5.9" height="0.9" fill="#f4f4f4"></rect><rect x="48.7" y="34" width="7.4" height="3.6" fill="#f0c030"></rect><rect x="51.3" y="34" width="1.5" height="3.6" fill="#f4f4f4"></rect><rect x="48.7" y="35.4" width="7.4" height="0.9" fill="#f4f4f4"></rect><rect x="8.0" y="38" width="4.5" height="3.6" fill="#d83030"></rect><rect x="12.9" y="38" width="4.7" height="3.6" fill="#e6d6d8"></rect><rect x="14.5" y="38" width="0.9" height="3.6" fill="#f4f4f4"></rect><rect x="12.9" y="39.4" width="4.7" height="0.9" fill="#f4f4f4"></rect><rect x="18.0" y="38" width="5.8" height="3.6" fill="#e0e0e8"></rect><rect x="24.2" y="38" width="4.9" height="3.6" fill="#e6d6d8"></rect><rect x="29.5" y="38" width="4.2" height="3.6" fill="#c02828"></rect><rect x="34.1" y="38" width="5.6" height="3.6" fill="#3a9a40"></rect><rect x="40.1" y="38" width="5.8" height="3.6" fill="#1a2a6a"></rect><rect x="42.1" y="38" width="1.2" height="3.6" fill="#f4f4f4"></rect><rect x="40.1" y="39.4" width="5.8" height="0.9" fill="#f4f4f4"></rect><rect x="46.3" y="38" width="4.5" height="3.6" fill="#1a2a6a"></rect><rect x="47.9" y="38" width="0.9" height="3.6" fill="#f4f4f4"></rect><rect x="46.3" y="39.4" width="4.5" height="0.9" fill="#f4f4f4"></rect><rect x="51.2" y="38" width="5.5" height="3.6" fill="#d83030"></rect><rect x="8.1" y="42" width="4.5" height="3.6" fill="#d83030"></rect><rect x="13.0" y="42" width="6.5" height="3.6" fill="#1a2a6a"></rect><rect x="15.3" y="42" width="1.3" height="3.6" fill="#f4f4f4"></rect><rect x="13.0" y="43.4" width="6.5" height="0.9" fill="#f4f4f4"></rect><rect x="20.0" y="42" width="6.4" height="3.6" fill="#1a2a6a"></rect><rect x="26.8" y="42" width="6.7" height="3.6" fill="#d83030"></rect><rect x="33.9" y="42" width="4.2" height="3.6" fill="#d83030"></rect><rect x="35.4" y="42" width="0.8" height="3.6" fill="#f4f4f4"></rect><rect x="33.9" y="43.4" width="4.2" height="0.9" fill="#f4f4f4"></rect><rect x="38.5" y="42" width="6.7" height="3.6" fill="#1a2a6a"></rect><rect x="45.6" y="42" width="4.1" height="3.6" fill="#d83030"></rect><rect x="50.1" y="42" width="6.1" height="3.6" fill="#1a2a6a"></rect></g>
<circle cx="32" cy="20.5" r="22.5" fill="url(#gsh)"></circle>
<path d="M30 57 L66 42" stroke="#7a3a18" stroke-width="3.5" stroke-linecap="round"></path>
<ellipse cx="87" cy="52" rx="29" ry="7.5" fill="#6a3016"></ellipse>
<rect x="58" y="46" width="58" height="8" fill="#83411e"></rect>
<ellipse cx="87" cy="46" rx="29" ry="5" fill="#a65a2e"></ellipse>
<ellipse cx="78" cy="35" rx="13" ry="11" fill="#8e4820"></ellipse>
<rect x="80" y="25" width="11" height="21" fill="#c9b070"></rect>
<ellipse cx="92" cy="35" rx="6" ry="10.5" fill="#9a5226"></ellipse>
<ellipse cx="72" cy="33" rx="6" ry="8" fill="#b46a38"></ellipse>
</svg></div>
<div class="a" style="left:203px;top:99px;width:131.3px;height:61.5px;border-radius:5px;overflow:hidden;background:#f4f4f4">
<svg class="a" style="left:0;top:0" width="131" height="62" viewBox="0 0 131 62">
<path d="M0 0 H16 L0 6 Z" fill="#8a5a34"></path>
<path d="M58 0 H100 V20 Z" fill="#a87240"></path>
<path d="M96 0 H131 V44 C120 46 100 40 98 22 Z" fill="#161616"></path>
<ellipse cx="117" cy="16" rx="13" ry="17" fill="#2a2a2a"></ellipse>
<ellipse cx="119" cy="14" rx="8" ry="11" fill="#1a1a1a"></ellipse>
<text x="0" y="0" transform="translate(33 12) rotate(29)" font-family="Liberation Serif" font-weight="700" font-size="22" fill="#141414" textLength="102" lengthAdjust="spacingAndGlyphs">Case Law</text>
<path d="M52 41 L72 50" stroke="#555" stroke-width="0.9"></path>
<path d="M40 50 L60 59" stroke="#aaa" stroke-width="0.6"></path>
<path d="M3 16 L14 10 L15 13 L4 19 Z" fill="#c8b070"></path>
<path d="M-4 44 L18 22 C26 15 38 20 38 30 C38 36 34 40 28 44 L8 62 H-4 Z" fill="#151515"></path>
<path d="M4 38 L22 22 L32 40 L14 55 Z" fill="#b9a05a"></path>
<path d="M8 38 L21 27 L27 36 L13 47 Z" fill="#d9c68a"></path>
<ellipse cx="30" cy="30" rx="7" ry="12" transform="rotate(-35 30 30)" fill="#1c1c1c"></ellipse>
<path d="M22 50 L32 62 H40 L28 47 Z" fill="#121212"></path>
</svg></div>
<div class="a" style="left:347.3px;top:99px;width:131.9px;height:61.5px;border-radius:5px;overflow:hidden;background:#f0f0f0">
<svg class="a" style="left:0;top:0" width="132" height="62" viewBox="0 0 132 62">
<path d="M50 1.5 C55 0.5 58 4 56 10 C54 16 52 21 50 26 L62 28 C67 29 67 34 63 36 C67 38 66 43 62 45 C66 47 64 52 60 53 C63 56 61 62 56 62 L20 62 C10 62 3 56 2 46 C1 36 5 29 15 28 C25 27 34 20 41 10 C44 4 46 2 50 1.5 Z" fill="#3a9140" stroke="#163a18" stroke-width="2"></path>
<path d="M50 26 C44 27 40 30 42 34 L62 36 M42 34 C38 38 41 44 46 45 L62 45 M46 45 C42 48 44 53 48 53 L60 53" stroke="#163a18" stroke-width="1.8" fill="none"></path>
<path d="M82 61 C77 61 74 57 76 51 C78 45 80 39 82 35 L71 33 C66 32 66 27 70 25 C66 23 67 18 71 16 C67 14 69 9 73 8 C70 5 72 0.5 77 0.5 L111 0.5 C121 0.5 129 6 130 16 C131 26 127 33 117 34 C107 35 97 41 90 51 C87 57 86 61 82 61 Z" fill="#f45252" stroke="#4a1212" stroke-width="2"></path>
<path d="M82 35 C88 34 92 31 90 27 L70 25 M90 27 C94 23 91 17 86 16 L71 16 M86 16 C90 13 88 8 84 8 L73 8" stroke="#4a1212" stroke-width="1.8" fill="none"></path>
</svg></div>
<div class="a" style="left:58px;top:172.3px;width:131.6px;height:101.7px;background:#333333;border-radius:0 0 9px 9px"></div>
<div class="a" style="left:203px;top:172.3px;width:131.6px;height:101.7px;background:#333333;border-radius:0 0 9px 9px"></div>
<div class="a" style="left:347.2px;top:172.3px;width:131.6px;height:101.7px;background:#333333;border-radius:0 0 9px 9px"></div>
<div class="t" style="left: 107.9px; top: 180.87px; font-size: 12.6px; color: rgb(230, 230, 230); font-weight: 400; font-family: &quot;Liberation Sans&quot;; transform-origin: 0px 50%; transform: scaleX(1.088);">Does</div>
<div class="t" style="left: 70.8px; top: 195.47px; font-size: 12.6px; color: rgb(230, 230, 230); font-weight: 400; font-family: &quot;Liberation Sans&quot;; transform-origin: 0px 50%; transform: scaleX(1.158);">international law</div>
<div class="t" style="left: 82.3px; top: 210.37px; font-size: 12.6px; color: rgb(230, 230, 230); font-weight: 400; font-family: &quot;Liberation Sans&quot;; transform-origin: 0px 50%; transform: scaleX(1.158);">provide for a</div>
<div class="t" style="left: 77.2px; top: 224.87px; font-size: 12.6px; color: rgb(230, 230, 230); font-weight: 400; font-family: &quot;Liberation Sans&quot;; transform-origin: 0px 50%; transform: scaleX(1.134);">right to access</div>
<div class="t" style="left: 83.6px; top: 239.47px; font-size: 12.6px; color: rgb(230, 230, 230); font-weight: 400; font-family: &quot;Liberation Sans&quot;; transform-origin: 0px 50%; transform: scaleX(1.112);">the territory?</div>
<div class="t" style="left: 233.7px; top: 180.87px; font-size: 12.6px; color: rgb(230, 230, 230); font-weight: 400; font-family: &quot;Liberation Sans&quot;; transform-origin: 0px 50%; transform: scaleX(1.097);">What is the</div>
<div class="t" style="left: 218.8px; top: 195.47px; font-size: 12.6px; color: rgb(230, 230, 230); font-weight: 400; font-family: &quot;Liberation Sans&quot;; transform-origin: 0px 50%; transform: scaleX(1.164);">content of such</div>
<div class="t" style="left: 243.9px; top: 210.37px; font-size: 12.6px; color: rgb(230, 230, 230); font-weight: 400; font-family: &quot;Liberation Sans&quot;; transform-origin: 0px 50%; transform: scaleX(1.159);">a right?</div>
<div class="t" style="left: 231.9px; top: 230.47px; font-size: 12.6px; color: rgb(230, 230, 230); font-weight: 400; font-family: &quot;Liberation Sans&quot;; transform-origin: 0px 50%; transform: scaleX(1.105);">- elements?</div>
<div class="t" style="left: 245px; top: 249.97px; font-size: 12.6px; color: rgb(230, 230, 230); font-weight: 400; font-family: &quot;Liberation Sans&quot;; transform-origin: 0px 50%; transform: scaleX(1.06);">- limits?</div>
<div class="t" style="left: 391px; top: 180.67px; font-size: 12.6px; color: rgb(230, 230, 230); font-weight: 400; font-family: &quot;Liberation Sans&quot;; transform-origin: 0px 50%; transform: scaleX(1.169);">Critical</div>
<div class="t" style="left: 371px; top: 195.17px; font-size: 12.6px; color: rgb(230, 230, 230); font-weight: 400; font-family: &quot;Liberation Sans&quot;; transform-origin: 0px 50%; transform: scaleX(1.19);">evaluation of</div>
<div class="t" style="left: 382.8px; top: 209.47px; font-size: 12.6px; color: rgb(230, 230, 230); font-weight: 400; font-family: &quot;Liberation Sans&quot;; transform-origin: 0px 50%; transform: scaleX(1.19);">identified</div>
<div class="t" style="left: 376.6px; top: 224.47px; font-size: 12.6px; color: rgb(230, 230, 230); font-weight: 400; font-family: &quot;Liberation Sans&quot;; transform-origin: 0px 50%; transform: scaleX(1.115);">standards –</div>
<div class="t" style="left: 381.9px; top: 239.17px; font-size: 12.6px; color: rgb(230, 230, 230); font-weight: 400; font-family: &quot;Liberation Sans&quot;; transform-origin: 0px 50%; transform: scaleX(1.148);">pros/cons</div></div>
<div class="a" style="left:173.2px;top:298px;width:503px;height:284.3px;overflow:hidden;transform:scale(0.1463);transform-origin:0 0"><div class="a" style="left:0;top:0;width:503px;height:283px;background:linear-gradient(180deg,#ffffff 0%,#fdfefe 38%,#eef4f6 62%,#d9e8ee 85%,#cde1e9 100%)"></div>
<svg class="a" style="left:0;top:0" width="503" height="283" viewBox="0 0 503 283">
<path d="M26 53 Q0 168 58 283" stroke="#5a7a92" stroke-width="3.5" fill="none"></path>
<path d="M7 95 Q15 189 50 283" stroke="#5a7a92" stroke-width="3.5" fill="none"></path>
<path d="M7 139 Q13 211 43 283" stroke="#c9d6dc" stroke-width="3.5" fill="none"></path>
</svg>
<div class="a" style="left:0;top:0;width:10px;height:283px;background:#2b5574"></div>
<svg class="a" style="left:0;top:29px" width="66" height="22" viewBox="0 0 66 22"><path d="M0 0.6 H55.7 L65 11 L55.7 21 H0 Z" fill="#333333"></path></svg></div>
<div class="a" style="left:189.6px;top:303.4px;width:51.4px;height:0.7px;background:#5a9ab8;"></div>
<div class="a" style="left:189.6px;top:306.4px;width:45px;height:0.7px;background:#5a9ab8;"></div>
<div class="a" style="left:182px;top:310.2px;width:20px;height:0.5px;background:#9a9a9a;"></div>
<div class="a" style="left:184px;top:312.2px;width:12px;height:0.5px;background:#9a9a9a;"></div>
<div class="a" style="left:184px;top:314.1px;width:30px;height:0.5px;background:#9a9a9a;"></div>
<div class="a" style="left:186px;top:316.6px;width:36px;height:0.5px;background:#9a9a9a;"></div>
<div class="a" style="left:182px;top:319px;width:32px;height:0.5px;background:#9a9a9a;"></div>
<div class="a" style="left:186px;top:321.5px;width:34px;height:0.5px;background:#9a9a9a;"></div>
<div class="a" style="left:186px;top:324.4px;width:30px;height:0.5px;background:#9a9a9a;"></div>
<div class="a" style="left:184px;top:327.4px;width:8px;height:0.5px;background:#9a9a9a;"></div>
<div class="a" style="left:188px;top:329.3px;width:30px;height:0.5px;background:#9a9a9a;"></div>
<div class="a" style="left:188px;top:331.8px;width:36px;height:0.5px;background:#9a9a9a;"></div>
<div class="a" style="left:182px;top:335.2px;width:40px;height:0.5px;background:#9a9a9a;"></div>
<div class="a" style="left:222.2px;top:311.6px;width:23.4px;height:23px;background:#e8e0d0;overflow:hidden;">
<div class="a" style="left:0px;top:0px;width:6px;height:23px;background:#c8b890;"></div>
<div class="a" style="left:12px;top:0px;width:5px;height:23px;background:#f0ece0;"></div>
<div class="a" style="left:17px;top:0px;width:6.4px;height:23px;background:#d8d0b8;"></div>
<div class="a" style="left:0px;top:0px;width:8px;height:6px;background:#6a8a60;"></div>
<div class="a" style="left:1.5px;top:5.5px;width:5.0px;height:7.0px;border-radius:50%;background:#4a3a30;"></div>
<div class="a" style="left:8.5px;top:3.5px;width:5.0px;height:7.0px;border-radius:50%;background:#5a4a40;"></div>
<div class="a" style="left:16.5px;top:6.5px;width:5.0px;height:7.0px;border-radius:50%;background:#3a2a20;"></div>
<div class="a" style="left:2px;top:12px;width:5px;height:11px;background:#a86a50;"></div>
<div class="a" style="left:9px;top:11px;width:5px;height:12px;background:#6a7a98;"></div>
<div class="a" style="left:17px;top:13px;width:5px;height:10px;background:#e8d8c0;"></div>
</div>
<div class="a" style="left:173.2px;top:347.6px;width:503px;height:288.4px;overflow:hidden;transform:scale(0.1463);transform-origin:0 0"><div class="a" style="left:0;top:0;width:503px;height:283px;background:linear-gradient(180deg,#ffffff 0%,#fdfefe 38%,#eef4f6 62%,#d9e8ee 85%,#cde1e9 100%)"></div>
<svg class="a" style="left:0;top:0" width="503" height="283" viewBox="0 0 503 283">
<path d="M26 53 Q0 168 58 283" stroke="#5a7a92" stroke-width="3.5" fill="none"></path>
<path d="M7 95 Q15 189 50 283" stroke="#5a7a92" stroke-width="3.5" fill="none"></path>
<path d="M7 139 Q13 211 43 283" stroke="#c9d6dc" stroke-width="3.5" fill="none"></path>
</svg>
<div class="a" style="left:0;top:0;width:10px;height:283px;background:#2b5574"></div>
<svg class="a" style="left:0;top:29px" width="66" height="22" viewBox="0 0 66 22"><path d="M0 0.6 H55.7 L65 11 L55.7 21 H0 Z" fill="#333333"></path></svg></div>
<div class="a" style="left:186px;top:353.6px;width:53.5px;height:0.9px;background:#3a8aa8;"></div>
<div class="a" style="left:181px;top:358.5px;width:4px;height:0.5px;background:#9a9a9a;"></div>
<div class="a" style="left:181px;top:362.1px;width:23px;height:0.5px;background:#9a9a9a;"></div>
<div class="a" style="left:181px;top:365.7px;width:18px;height:0.5px;background:#9a9a9a;"></div>
<div class="a" style="left:187px;top:369.3px;width:18px;height:0.5px;background:#9a9a9a;"></div>
<div class="a" style="left:187px;top:372.9px;width:20px;height:0.5px;background:#9a9a9a;"></div>
<div class="a" style="left:187px;top:376.5px;width:16px;height:0.5px;background:#9a9a9a;"></div>
<div class="a" style="left:187px;top:380.1px;width:22px;height:0.5px;background:#9a9a9a;"></div>
<div class="a" style="left:212px;top:358.5px;width:10px;height:0.5px;background:#9a9a9a;"></div>
<div class="a" style="left:212px;top:362.1px;width:29px;height:0.5px;background:#9a9a9a;"></div>
<div class="a" style="left:212px;top:365.7px;width:20px;height:0.5px;background:#9a9a9a;"></div>
<div class="a" style="left:215px;top:369.3px;width:22px;height:0.5px;background:#9a9a9a;"></div>
<div class="a" style="left:215px;top:372.9px;width:18px;height:0.5px;background:#9a9a9a;"></div>
<div class="a" style="left:215px;top:376.5px;width:24px;height:0.5px;background:#9a9a9a;"></div>
<div class="a" style="left:215px;top:380.1px;width:14px;height:0.5px;background:#9a9a9a;"></div>
<div class="a" style="left:173.2px;top:398.8px;width:503px;height:282.9px;overflow:hidden;transform:scale(0.1463);transform-origin:0 0"><div class="a" style="left:0;top:0;width:503px;height:283px;background:linear-gradient(180deg,#ffffff 0%,#fdfefe 38%,#eef4f6 62%,#d9e8ee 85%,#cde1e9 100%)"></div>
<svg class="a" style="left:0;top:0" width="503" height="283" viewBox="0 0 503 283">
<path d="M26 53 Q0 168 58 283" stroke="#5a7a92" stroke-width="3.5" fill="none"></path>
<path d="M7 95 Q15 189 50 283" stroke="#5a7a92" stroke-width="3.5" fill="none"></path>
<path d="M7 139 Q13 211 43 283" stroke="#c9d6dc" stroke-width="3.5" fill="none"></path>
</svg>
<div class="a" style="left:0;top:0;width:10px;height:283px;background:#2b5574"></div>
<svg class="a" style="left:0;top:29px" width="66" height="22" viewBox="0 0 66 22"><path d="M0 0.6 H55.7 L65 11 L55.7 21 H0 Z" fill="#333333"></path></svg></div>
<div class="a" style="left:181px;top:404.5px;width:28px;height:0.8px;background:#7fb0c4;"></div>
<div class="a" style="left:181px;top:407.7px;width:26px;height:0.8px;background:#7fb0c4;"></div>
<div class="a" style="left:181px;top:410.9px;width:30px;height:0.8px;background:#7fb0c4;"></div>
<div class="a" style="left:181px;top:414.1px;width:20px;height:0.8px;background:#7fb0c4;"></div>
<div class="a" style="left:181px;top:418.5px;width:30px;height:0.6px;background:#a0a0a0;"></div>
<div class="a" style="left:216.8px;top:408.4px;width:27.2px;height:21.6px;background:#0d1a38;overflow:hidden;">
<div class="a" style="left:1px;top:1.5px;width:22px;height:0.8px;background:#22587e;"></div>
<div class="a" style="left:4px;top:4.9px;width:22px;height:0.8px;background:#2f80a8;"></div>
<div class="a" style="left:1px;top:8.3px;width:22px;height:0.8px;background:#22587e;"></div>
<div class="a" style="left:4px;top:11.7px;width:22px;height:0.8px;background:#2f80a8;"></div>
<div class="a" style="left:1px;top:15.1px;width:22px;height:0.8px;background:#22587e;"></div>
<div class="a" style="left:4px;top:18.5px;width:22px;height:0.8px;background:#2f80a8;"></div>
<div class="a" style="left:3px;top:12px;width:20px;height:1.2px;background:#3aa878;"></div>
</div>
<div class="a" style="left:159.5px;top:429.3px;width:704.5px;height:8.1px;background:#f3f3f3;"></div>
<div class="t" style="left: 161px; top: 431.48px; font-size: 6.4px; color: rgb(122, 122, 122); font-weight: 400; font-family: &quot;Liberation Sans&quot;; transform-origin: 0px 50%; transform: scaleX(0.732);">Slide 3 of 13</div>
<div class="t" style="left: 202.7px; top: 431.48px; font-size: 6.4px; color: rgb(122, 122, 122); font-weight: 400; font-family: &quot;Liberation Sans&quot;; transform-origin: 0px 50%; transform: scaleX(0.74);">Serbian (Latin, Serbia)</div>
<svg class="a" style="left:632px;top:430.5px;" width="6" height="6" viewBox="0 0 6 6"><path d="M0.5 3 H5.5 V5.5 H0.5 Z M1.5 3 L3 0.5 L4.5 3" stroke="#888" stroke-width="0.6" fill="none"></path></svg>
<div class="t" style="left: 639px; top: 432.34px; font-size: 6.3px; color: rgb(122, 122, 122); font-weight: 400; font-family: &quot;Liberation Sans&quot;; transform-origin: 0px 50%; transform: scaleX(0.851);">Notes</div>
<svg class="a" style="left:662.5px;top:430.5px;" width="8" height="6" viewBox="0 0 8 6"><path d="M0.5 0.5 H7.5 V4.5 H3 L1.5 6 V4.5 H0.5 Z" stroke="#777" stroke-width="0.7" fill="none"></path></svg>
<div class="t" style="left: 671px; top: 432.34px; font-size: 6.3px; color: rgb(122, 122, 122); font-weight: 400; font-family: &quot;Liberation Sans&quot;; transform-origin: 0px 50%; transform: scaleX(0.722);">Comments</div>
<div class="a" style="left:703px;top:429.8px;width:17px;height:8px;background:#d9d9d9;"></div>
<svg class="a" style="left:708px;top:430.8px;" width="7" height="6" viewBox="0 0 7 6"><rect x="0.5" y="0.5" width="6" height="5" fill="none" stroke="#666" stroke-width="0.8"></rect><rect x="2" y="2" width="3" height="2" fill="#666"></rect></svg>
<svg class="a" style="left:727px;top:431px;" width="7" height="6" viewBox="0 0 7 6"><rect x="0.5" y="0.5" width="2.5" height="2" fill="none" stroke="#777" stroke-width="0.6"></rect><rect x="4" y="0.5" width="2.5" height="2" fill="none" stroke="#777" stroke-width="0.6"></rect><rect x="0.5" y="3.5" width="2.5" height="2" fill="none" stroke="#777" stroke-width="0.6"></rect><rect x="4" y="3.5" width="2.5" height="2" fill="none" stroke="#777" stroke-width="0.6"></rect></svg>
<svg class="a" style="left:747px;top:431px;" width="7" height="6" viewBox="0 0 7 6"><path d="M0.5 0.5 H3 V5.5 H0.5 Z M4 0.5 H6.5 V5.5 H4 Z" stroke="#777" stroke-width="0.6" fill="none"></path></svg>
<svg class="a" style="left:765px;top:430.5px;" width="6" height="7" viewBox="0 0 6 7"><rect x="0.5" y="0.5" width="5" height="3.5" fill="none" stroke="#777" stroke-width="0.6"></rect><path d="M3 4 V6.5 M1.5 6.5 H4.5" stroke="#777" stroke-width="0.6"></path></svg>
<div class="a" style="left:779px;top:433.8px;width:3px;height:0.7px;background:#888;"></div>
<div class="a" style="left:785px;top:434px;width:47px;height:0.6px;background:#b0b0b0;"></div>
<div class="a" style="left:803.8px;top:431.5px;width:1.5px;height:5px;background:#555;"></div>
<div class="a" style="left:833.5px;top:433.8px;width:3px;height:0.7px;background:#888;"></div>
<div class="a" style="left:834.7px;top:432.6px;width:0.7px;height:3px;background:#888;"></div>
<div class="t" style="left: 843px; top: 432.18px; font-size: 5.5px; color: rgb(122, 122, 122); font-weight: 400; font-family: &quot;Liberation Sans&quot;; transform-origin: 0px 50%; transform: scaleX(0.772);">85%</div>
<svg class="a" style="left:857px;top:431px;" width="6" height="6" viewBox="0 0 6 6"><path d="M3 0.2 L5.8 3 L3 5.8 L0.2 3 Z" fill="none" stroke="#666" stroke-width="0.7"></path><path d="M3 1.5 V4.5 M1.5 3 H4.5" stroke="#666" stroke-width="0.5"></path></svg>
<div class="a" style="left:0px;top:440px;width:1024px;height:29px;background:#020202;"></div>
<div class="a" style="left:0px;top:466.5px;width:1024px;height:1.5px;background:#0d0d0d;"></div>
<div class="a" style="left:0px;top:468px;width:1024px;height:1px;background:#e4e4e4;"></div>
<svg class="a" style="left:19px;top:442px;" width="13" height="13" viewBox="0 0 13 13"><rect x="4" y="0.5" width="4.6" height="7.5" rx="2.3" fill="#8c8c8c"></rect><path d="M2.5 5.5 A3.8 3.8 0 0 0 10 5.5" stroke="#8c8c8c" stroke-width="1" fill="none"></path><path d="M6.3 9.3 V12 M4 12 H8.6" stroke="#8c8c8c" stroke-width="1"></path><path d="M0.5 12.2 L12.2 0.5" stroke="#c43a3a" stroke-width="1.1"></path></svg>
<svg class="a" style="left:41px;top:445.5px;" width="5" height="3" viewBox="0 0 5 3"><path d="M0.3 2.7 L2.5 0.5 L4.7 2.7" stroke="#cfcfcf" stroke-width="0.9" fill="none"></path></svg>
<div class="t" style="left: 7px; top: 457.64px; font-size: 7.2px; color: rgb(166, 166, 166); font-weight: 400; font-family: &quot;Liberation Sans&quot;; transform-origin: 0px 50%; transform: scaleX(0.897);">Включить звук</div>
<div class="a" style="left:48px;top:440.5px;width:48px;height:24.8px;background:#060606;border:1px solid #7c7c7c;border-radius:4px"></div>
<div class="a" style="left:86px;top:442.5px;width:8.5px;height:11px;background:#232323;border-radius:2px"></div>
<svg class="a" style="left:88px;top:445.5px;" width="5" height="3" viewBox="0 0 5 3"><path d="M0.3 2.7 L2.5 0.5 L4.7 2.7" stroke="#d8d8d8" stroke-width="0.9" fill="none"></path></svg>
<svg class="a" style="left:66px;top:444.5px;" width="14" height="8" viewBox="0 0 14 8"><rect x="0" y="0" width="9.5" height="8" rx="1.8" fill="#eeeeee"></rect><path d="M10 3 L13.5 0.5 V7.5 L10 5 Z" fill="#eeeeee"></path></svg>
<div class="t" style="left: 55px; top: 457.64px; font-size: 7.2px; color: rgb(242, 242, 242); font-weight: 400; font-family: &quot;Liberation Sans&quot;; transform-origin: 0px 50%; transform: scaleX(0.868);">Остановить показ в...</div>
<svg class="a" style="left:403px;top:443.5px;" width="14" height="10" viewBox="0 0 14 10"><circle cx="4" cy="2.6" r="2.4" fill="#c4c4c4"></circle><circle cx="9.5" cy="3.6" r="2.2" fill="#c4c4c4"></circle><rect x="0" y="5.8" width="8" height="3.8" rx="1.9" fill="#c4c4c4"></rect><rect x="7" y="6.6" width="6" height="3.2" rx="1.6" fill="#c4c4c4"></rect></svg>
<div class="t" style="left: 417px; top: 442px; font-size: 6px; color: rgb(224, 224, 224); font-weight: 400; font-family: &quot;Liberation Sans&quot;; transform-origin: 0px 50%; transform: scaleX(0.972);">20</div>
<div class="t" style="left: 394.4px; top: 457.64px; font-size: 7.2px; color: rgb(212, 212, 212); font-weight: 400; font-family: &quot;Liberation Sans&quot;; transform-origin: 0px 50%; transform: scaleX(0.891);">Участники</div>
<div class="a" style="left:463.7px;top:444px;width:12.7px;height:9px;background:#27d25a;border-radius:1.5px"></div>
<svg class="a" style="left:467px;top:445.5px;" width="6" height="6" viewBox="0 0 6 6"><path d="M3 5.5 V1.2 M1 3.2 L3 1 L5 3.2" stroke="#062a10" stroke-width="1.2" fill="none"></path></svg>
<div class="t" style="left: 437.5px; top: 457.64px; font-size: 7.2px; color: rgb(69, 196, 102); font-weight: 400; font-family: &quot;Liberation Sans&quot;; transform-origin: 0px 50%; transform: scaleX(0.888);">Демонстрация экра...</div>
<svg class="a" style="left:524px;top:443.5px;" width="12" height="10" viewBox="0 0 12 10"><path d="M1.5 0 H10.5 A1.5 1.5 0 0 1 12 1.5 V6.5 A1.5 1.5 0 0 1 10.5 8 H4 L2 10 V8 H1.5 A1.5 1.5 0 0 1 0 6.5 V1.5 A1.5 1.5 0 0 1 1.5 0 Z" fill="#a4a4a4"></path></svg>
<svg class="a" style="left:543.4px;top:445.7px;" width="5" height="3" viewBox="0 0 5 3"><path d="M0.3 2.7 L2.5 0.5 L4.7 2.7" stroke="#cfcfcf" stroke-width="0.9" fill="none"></path></svg>
<div class="t" style="left: 525px; top: 457.44px; font-size: 7.2px; color: rgb(212, 212, 212); font-weight: 400; font-family: &quot;Liberation Sans&quot;; transform-origin: 0px 50%; transform: scaleX(0.805);">Чат</div>
<svg class="a" style="left:566.5px;top:442.5px;" width="14" height="12" viewBox="0 0 14 12"><circle cx="5.2" cy="6.6" r="4.8" fill="#bdbdbd"></circle><circle cx="3.6" cy="5.6" r="0.7" fill="#111"></circle><circle cx="6.8" cy="5.6" r="0.7" fill="#111"></circle><path d="M3 7.5 A2.3 2.3 0 0 0 7.4 7.5" stroke="#111" stroke-width="0.8" fill="none"></path><path d="M11 0.5 V4.5 M9 2.5 H13" stroke="#cfcfcf" stroke-width="1"></path></svg>
<div class="t" style="left: 560px; top: 457.64px; font-size: 7.2px; color: rgb(212, 212, 212); font-weight: 400; font-family: &quot;Liberation Sans&quot;; transform-origin: 0px 50%; transform: scaleX(0.89);">Реакции</div>
<svg class="a" style="left:610px;top:443.5px;" width="11" height="11" viewBox="0 0 11 11"><g transform="translate(5.5 5.5)" fill="#bdbdbd"><circle r="3.6"></circle><rect x="-1.2" y="-5.3" width="2.4" height="2.6" transform="rotate(0)"></rect><rect x="-1.2" y="-5.3" width="2.4" height="2.6" transform="rotate(45)"></rect><rect x="-1.2" y="-5.3" width="2.4" height="2.6" transform="rotate(90)"></rect><rect x="-1.2" y="-5.3" width="2.4" height="2.6" transform="rotate(135)"></rect><rect x="-1.2" y="-5.3" width="2.4" height="2.6" transform="rotate(180)"></rect><rect x="-1.2" y="-5.3" width="2.4" height="2.6" transform="rotate(225)"></rect><rect x="-1.2" y="-5.3" width="2.4" height="2.6" transform="rotate(270)"></rect><rect x="-1.2" y="-5.3" width="2.4" height="2.6" transform="rotate(315)"></rect><circle r="1.6" fill="#020202"></circle></g></svg>
<div class="t" style="left: 599.6px; top: 457.64px; font-size: 7.2px; color: rgb(212, 212, 212); font-weight: 400; font-family: &quot;Liberation Sans&quot;; transform-origin: 0px 50%; transform: scaleX(0.899);">Настройки</div>
<svg class="a" style="left:655.3px;top:447px;" width="2" height="2" viewBox="0 0 2 2"><circle cx="1" cy="1" r="1" fill="#cfcfcf"></circle></svg>
<svg class="a" style="left:659.5px;top:447px;" width="2" height="2" viewBox="0 0 2 2"><circle cx="1" cy="1" r="1" fill="#cfcfcf"></circle></svg>
<svg class="a" style="left:663.7px;top:447px;" width="2" height="2" viewBox="0 0 2 2"><circle cx="1" cy="1" r="1" fill="#cfcfcf"></circle></svg>
<div class="t" style="left: 644.4px; top: 457.64px; font-size: 7.2px; color: rgb(212, 212, 212); font-weight: 400; font-family: &quot;Liberation Sans&quot;; transform-origin: 0px 50%; transform: scaleX(0.896);">Подробнее</div>
<div class="a" style="left:976.3px;top:446.3px;width:38.7px;height:15.1px;background:#df2a2c;border-radius:4px"></div>
<div class="t" style="left: 984.8px; top: 450.54px; font-size: 7.2px; color: rgb(255, 255, 255); font-weight: 700; font-family: &quot;Liberation Sans&quot;; transform-origin: 0px 50%; transform: scaleX(0.92);">Выйти</div>
</div>
</body></html>
